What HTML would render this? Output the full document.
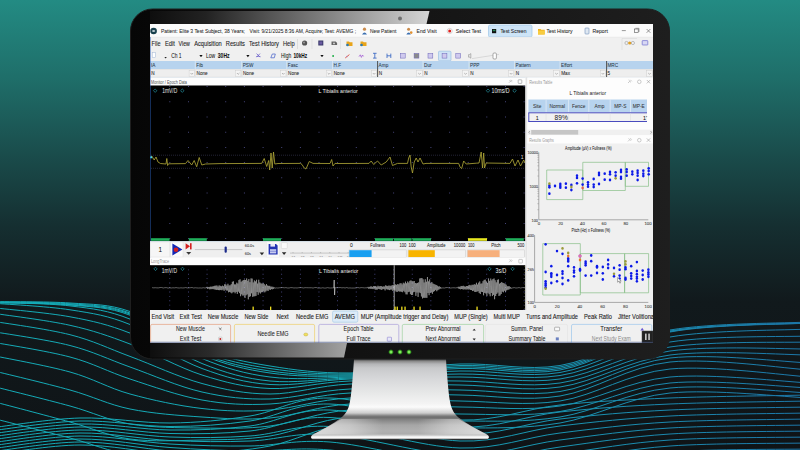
<!DOCTYPE html>
<html><head><meta charset="utf-8"><style>
html,body{margin:0;padding:0;width:800px;height:450px;overflow:hidden;background:#0f1417}
svg{display:block;font-family:"Liberation Sans", sans-serif}
</style></head><body>
<svg width="800" height="450" viewBox="0 0 800 450">
<defs>
 <linearGradient id="bg" x1="0" y1="0" x2="0" y2="1">
  <stop offset="0" stop-color="#238b83"/>
  <stop offset="0.17" stop-color="#1f6f6a"/>
  <stop offset="0.34" stop-color="#1a4d4c"/>
  <stop offset="0.5" stop-color="#152f31"/>
  <stop offset="0.67" stop-color="#11191c"/>
  <stop offset="1" stop-color="#0f1417"/>
 </linearGradient>
 <linearGradient id="wavecol" x1="0" y1="0" x2="1" y2="0">
  <stop offset="0" stop-color="#14abb7"/>
  <stop offset="0.45" stop-color="#15a6b4"/>
  <stop offset="0.75" stop-color="#1a8fb0"/>
  <stop offset="1" stop-color="#1c76a8"/>
 </linearGradient>
 <linearGradient id="bez" x1="0" y1="0" x2="1" y2="0">
  <stop offset="0" stop-color="#060606"/>
  <stop offset="0.5" stop-color="#141414"/>
  <stop offset="1" stop-color="#1e1e1e"/>
 </linearGradient>
 <linearGradient id="hlTop" gradientUnits="userSpaceOnUse" x1="150" y1="0" x2="429" y2="0">
  <stop offset="0" stop-color="#0e0e0e"/>
  <stop offset="0.2" stop-color="#222"/>
  <stop offset="0.6" stop-color="#7a7a7a"/>
  <stop offset="1" stop-color="#d4d4d4"/>
 </linearGradient>
 <linearGradient id="hlBot" gradientUnits="userSpaceOnUse" x1="150" y1="0" x2="347" y2="0">
  <stop offset="0" stop-color="#0e0e0e"/>
  <stop offset="0.3" stop-color="#2a2a2a"/>
  <stop offset="1" stop-color="#a2a2a2"/>
 </linearGradient>
 <linearGradient id="stand" gradientUnits="userSpaceOnUse" x1="0" y1="359.5" x2="0" y2="440">
  <stop offset="0.0000" stop-color="#505050"/>
  <stop offset="0.0248" stop-color="#8e8e8e"/>
  <stop offset="0.0559" stop-color="#b4b5b7"/>
  <stop offset="0.1056" stop-color="#c8c9cb"/>
  <stop offset="0.2298" stop-color="#d6d7d9"/>
  <stop offset="0.4037" stop-color="#e6e7e7"/>
  <stop offset="0.5528" stop-color="#f4f4f4"/>
  <stop offset="0.5901" stop-color="#fbfbfb"/>
  <stop offset="0.6273" stop-color="#e6e6e6"/>
  <stop offset="0.6646" stop-color="#cdcdcd"/>
  <stop offset="0.6957" stop-color="#8a8a8a"/>
  <stop offset="0.7143" stop-color="#6c6c6c"/>
  <stop offset="0.7516" stop-color="#858585"/>
  <stop offset="0.8137" stop-color="#a6a6a6"/>
  <stop offset="0.8882" stop-color="#b1b1b1"/>
  <stop offset="0.9255" stop-color="#acacac"/>
  <stop offset="0.9478" stop-color="#d8d8d8"/>
  <stop offset="0.9627" stop-color="#ffffff"/>
  <stop offset="0.9776" stop-color="#f0f0f0"/>
  <stop offset="0.9901" stop-color="#555555"/>
  <stop offset="1.0000" stop-color="#333333"/>
 </linearGradient>
 <radialGradient id="led">
  <stop offset="0" stop-color="#b8ff90"/>
  <stop offset="0.45" stop-color="#4fd030"/>
  <stop offset="1" stop-color="#1d5a18" stop-opacity="0"/>
 </radialGradient>
</defs>
<rect x="0" y="0" width="800" height="450" fill="url(#bg)"/><g fill="none" stroke="url(#wavecol)" stroke-width="1"><path d="M-10.0,301.6 C3.3,301.8 46.7,301.4 70.0,303.0 C93.3,304.6 108.0,303.8 130.0,311.5 C152.0,319.2 178.7,339.9 202.0,349.0 C225.3,358.1 245.3,362.0 270.0,366.0 C294.7,370.0 318.3,373.3 350.0,373.0 C381.7,372.7 425.0,365.2 460.0,364.0 C495.0,362.8 525.0,371.2 560.0,365.5 C595.0,359.8 628.3,337.2 670.0,330.0 C711.7,322.8 786.7,323.3 810.0,322.0"/><path d="M-10.0,302.0 C3.3,302.3 46.7,302.0 70.0,303.8 C93.3,305.6 108.0,305.1 130.0,313.0 C152.0,320.9 178.7,342.2 202.0,351.5 C225.3,360.8 245.3,364.8 270.0,368.5 C294.7,372.2 318.3,374.5 350.0,374.0 C381.7,373.5 425.0,366.7 460.0,365.5 C495.0,364.3 525.0,372.8 560.0,367.0 C595.0,361.2 628.3,338.3 670.0,331.0 C711.7,323.7 786.7,324.3 810.0,323.0"/><path d="M-10.0,302.4 C3.3,302.8 46.7,302.7 70.0,304.6 C93.3,306.5 108.0,305.9 130.0,314.0 C152.0,322.1 178.7,344.0 202.0,353.5 C225.3,363.0 245.3,367.4 270.0,371.0 C294.7,374.6 318.3,375.7 350.0,375.0 C381.7,374.3 425.0,368.1 460.0,367.0 C495.0,365.9 525.0,374.4 560.0,368.5 C595.0,362.6 628.3,339.1 670.0,331.5 C711.7,323.9 786.7,324.1 810.0,322.6"/><path d="M-10.0,302.6 C3.3,303.0 46.7,302.9 70.0,305.0 C93.3,307.1 108.0,306.9 130.0,315.2 C152.0,323.5 178.7,345.4 202.0,355.0 C225.3,364.6 245.3,369.5 270.0,373.0 C294.7,376.5 318.3,376.8 350.0,376.0 C381.7,375.2 425.0,369.5 460.0,368.5 C495.0,367.5 525.0,376.1 560.0,370.0 C595.0,363.9 628.3,339.8 670.0,332.0 C711.7,324.2 786.7,324.5 810.0,323.0"/><path d="M-10.0,302.4 C3.3,303.0 46.7,303.1 70.0,305.9 C93.3,308.7 108.0,310.3 130.0,319.1 C152.0,327.9 178.7,348.9 202.0,358.5 C225.3,368.1 245.3,373.9 270.0,377.0 C294.7,380.1 318.3,378.0 350.0,377.0 C381.7,376.0 425.0,371.8 460.0,371.0 C495.0,370.2 525.0,378.2 560.0,372.5 C595.0,366.8 628.3,344.2 670.0,337.0 C711.7,329.8 786.7,330.3 810.0,329.0"/><path d="M-10.0,303.0 C3.3,304.1 46.7,306.2 70.0,309.8 C93.3,313.4 108.0,315.6 130.0,324.5 C152.0,333.4 178.7,354.1 202.0,363.5 C225.3,372.9 245.3,378.6 270.0,381.0 C294.7,383.4 318.3,379.2 350.0,378.0 C381.7,376.8 425.0,374.4 460.0,374.0 C495.0,373.6 525.0,380.8 560.0,375.5 C595.0,370.2 628.3,348.6 670.0,342.0 C711.7,335.4 786.7,337.0 810.0,336.0"/><path d="M-10.0,307.4 C3.3,309.0 46.7,312.5 70.0,316.8 C93.3,321.1 108.0,324.5 130.0,333.1 C152.0,341.7 178.7,359.9 202.0,368.5 C225.3,377.1 245.3,382.8 270.0,384.5 C294.7,386.2 318.3,380.2 350.0,379.0 C381.7,377.8 425.0,377.0 460.0,377.0 C495.0,377.0 525.0,384.0 560.0,379.0 C595.0,374.0 628.3,353.2 670.0,347.0 C711.7,340.8 786.7,342.8 810.0,342.0"/><path d="M-10.0,312.8 C3.3,314.9 46.7,320.1 70.0,325.3 C93.3,330.5 108.0,335.7 130.0,344.0 C152.0,352.3 178.7,367.6 202.0,375.0 C225.3,382.4 245.3,387.5 270.0,388.5 C294.7,389.5 318.3,382.2 350.0,381.0 C381.7,379.8 425.0,380.7 460.0,381.0 C495.0,381.3 525.0,388.0 560.0,383.0 C595.0,378.0 628.3,356.7 670.0,351.0 C711.7,345.3 786.7,349.3 810.0,349.0"/><path d="M-10.0,320.8 C3.3,323.1 46.7,328.8 70.0,334.7 C93.3,340.6 108.0,348.3 130.0,356.4 C152.0,364.5 178.7,377.2 202.0,383.5 C225.3,389.8 245.3,393.9 270.0,394.0 C294.7,394.1 318.3,385.5 350.0,384.0 C381.7,382.5 425.0,384.5 460.0,385.0 C495.0,385.5 525.0,392.0 560.0,387.0 C595.0,382.0 628.3,360.3 670.0,355.0 C711.7,349.7 786.7,355.0 810.0,355.0"/><path d="M-10.0,331.1 C3.3,333.5 46.7,339.5 70.0,345.5 C93.3,351.5 108.0,359.2 130.0,367.0 C152.0,374.8 178.7,386.7 202.0,392.0 C225.3,397.3 245.3,399.5 270.0,399.0 C294.7,398.5 318.3,390.5 350.0,389.0 C381.7,387.5 425.0,389.6 460.0,390.0 C495.0,390.4 525.0,396.8 560.0,391.5 C595.0,386.2 628.3,362.8 670.0,358.0 C711.7,353.2 786.7,362.2 810.0,363.0"/><path d="M-10.0,341.7 C3.3,344.2 46.7,350.8 70.0,357.0 C93.3,363.2 108.0,371.8 130.0,379.0 C152.0,386.2 178.7,395.8 202.0,400.0 C225.3,404.2 245.3,405.2 270.0,404.0 C294.7,402.8 318.3,394.5 350.0,393.0 C381.7,391.5 425.0,394.5 460.0,395.0 C495.0,395.5 525.0,401.5 560.0,396.0 C595.0,390.5 628.3,366.3 670.0,362.0 C711.7,357.7 786.7,368.7 810.0,370.0"/><path d="M-10.0,355.0 C3.3,357.8 46.7,365.5 70.0,372.0 C93.3,378.5 108.0,387.9 130.0,394.0 C152.0,400.1 178.7,405.8 202.0,408.5 C225.3,411.2 245.3,411.8 270.0,410.0 C294.7,408.2 318.3,399.5 350.0,398.0 C381.7,396.5 425.0,400.5 460.0,401.0 C495.0,401.5 525.0,406.3 560.0,401.0 C595.0,395.7 628.3,373.0 670.0,369.0 C711.7,365.0 786.7,375.7 810.0,377.0"/><path d="M-10.0,370.0 C3.3,373.3 46.7,383.5 70.0,390.0 C93.3,396.5 108.0,404.5 130.0,409.0 C152.0,413.5 178.7,415.5 202.0,417.0 C225.3,418.5 245.3,420.2 270.0,418.0 C294.7,415.8 318.3,405.8 350.0,404.0 C381.7,402.2 425.0,406.7 460.0,407.0 C495.0,407.3 525.0,411.0 560.0,406.0 C595.0,401.0 628.3,380.8 670.0,377.0 C711.7,373.2 786.7,382.0 810.0,383.0"/><path d="M-10.0,385.6 C3.3,389.0 46.7,399.6 70.0,406.0 C93.3,412.4 108.0,420.3 130.0,424.0 C152.0,427.7 178.7,427.7 202.0,428.0 C225.3,428.3 245.3,429.0 270.0,426.0 C294.7,423.0 318.3,412.0 350.0,410.0 C381.7,408.0 425.0,413.8 460.0,414.0 C495.0,414.2 525.0,416.7 560.0,411.5 C595.0,406.3 628.3,386.9 670.0,383.0 C711.7,379.1 786.7,387.2 810.0,388.0"/><path d="M-10.0,400.7 C3.3,404.2 46.7,415.6 70.0,422.0 C93.3,428.4 108.0,436.0 130.0,439.0 C152.0,442.0 178.7,440.5 202.0,440.0 C225.3,439.5 245.3,439.8 270.0,436.0 C294.7,432.2 318.3,419.5 350.0,417.0 C381.7,414.5 425.0,421.0 460.0,421.0 C495.0,421.0 525.0,422.5 560.0,417.0 C595.0,411.5 628.3,392.0 670.0,388.0 C711.7,384.0 786.7,392.2 810.0,393.0"/><path d="M-10.0,417.6 C3.3,421.0 46.7,431.9 70.0,438.0 C93.3,444.1 108.0,451.5 130.0,454.0 C152.0,456.5 178.7,454.3 202.0,453.0 C225.3,451.7 245.3,450.8 270.0,446.0 C294.7,441.2 318.3,427.0 350.0,424.0 C381.7,421.0 425.0,428.2 460.0,428.0 C495.0,427.8 525.0,428.8 560.0,423.0 C595.0,417.2 628.3,397.2 670.0,393.0 C711.7,388.8 786.7,397.2 810.0,398.0"/><path d="M-10.0,428.0 C5.0,426.3 50.0,418.8 80.0,418.0 C110.0,417.2 141.7,423.3 170.0,423.0 C198.3,422.7 223.3,420.2 250.0,416.0 C276.7,411.8 295.0,397.3 330.0,398.0 C365.0,398.7 421.7,418.8 460.0,420.0 C498.3,421.2 525.0,408.7 560.0,405.0 C595.0,401.3 628.3,399.7 670.0,398.0 C711.7,396.3 786.7,395.5 810.0,395.0"/><path d="M-10.0,431.0 C5.0,429.3 50.0,421.8 80.0,421.0 C110.0,420.2 141.7,426.5 170.0,426.5 C198.3,426.5 223.3,424.8 250.0,421.0 C276.7,417.2 295.0,403.0 330.0,404.0 C365.0,405.0 421.7,425.7 460.0,427.0 C498.3,428.3 525.0,415.8 560.0,412.0 C595.0,408.2 628.3,405.8 670.0,404.0 C711.7,402.2 786.7,401.5 810.0,401.0"/><path d="M-10.0,434.0 C5.0,432.3 50.0,424.7 80.0,424.0 C110.0,423.3 141.7,429.7 170.0,430.0 C198.3,430.3 223.3,429.3 250.0,426.0 C276.7,422.7 295.0,408.7 330.0,410.0 C365.0,411.3 421.7,432.5 460.0,434.0 C498.3,435.5 525.0,423.0 560.0,419.0 C595.0,415.0 628.3,412.0 670.0,410.0 C711.7,408.0 786.7,407.5 810.0,407.0"/><path d="M-10.0,437.0 C5.0,435.3 50.0,427.6 80.0,427.0 C110.0,426.4 141.7,432.8 170.0,433.5 C198.3,434.2 223.3,433.7 250.0,431.0 C276.7,428.3 295.0,415.8 330.0,417.5 C365.0,419.2 421.7,439.6 460.0,441.0 C498.3,442.4 525.0,430.2 560.0,426.0 C595.0,421.8 628.3,418.2 670.0,416.0 C711.7,413.8 786.7,413.5 810.0,413.0"/><path d="M-10.0,440.0 C5.0,438.3 50.0,430.5 80.0,430.0 C110.0,429.5 141.7,436.0 170.0,437.0 C198.3,438.0 223.3,437.8 250.0,436.0 C276.7,434.2 295.0,424.5 330.0,426.5 C365.0,428.5 421.7,446.9 460.0,448.0 C498.3,449.1 525.0,437.3 560.0,433.0 C595.0,428.7 628.3,424.3 670.0,422.0 C711.7,419.7 786.7,419.5 810.0,419.0"/><path d="M-10.0,443.0 C5.0,441.3 50.0,433.4 80.0,433.0 C110.0,432.6 141.7,439.2 170.0,440.5 C198.3,441.8 223.3,442.0 250.0,441.0 C276.7,440.0 295.0,432.1 330.0,434.4 C365.0,436.7 421.7,454.1 460.0,455.0 C498.3,455.9 525.0,444.5 560.0,440.0 C595.0,435.5 628.3,430.5 670.0,428.0 C711.7,425.5 786.7,425.5 810.0,425.0"/><path d="M-10.0,446.0 C5.0,444.3 50.0,436.3 80.0,436.0 C110.0,435.7 141.7,442.3 170.0,444.0 C198.3,445.7 223.3,446.3 250.0,446.0 C276.7,445.7 295.0,439.3 330.0,442.0 C365.0,444.7 421.7,461.2 460.0,462.0 C498.3,462.8 525.0,451.7 560.0,447.0 C595.0,442.3 628.3,436.7 670.0,434.0 C711.7,431.3 786.7,431.5 810.0,431.0"/><path d="M-10.0,449.0 C5.0,447.3 50.0,439.2 80.0,439.0 C110.0,438.8 141.7,445.5 170.0,447.5 C198.3,449.5 223.3,450.6 250.0,451.0 C276.7,451.4 295.0,447.0 330.0,450.0 C365.0,453.0 421.7,468.3 460.0,469.0 C498.3,469.7 525.0,458.8 560.0,454.0 C595.0,449.2 628.3,442.8 670.0,440.0 C711.7,437.2 786.7,437.5 810.0,437.0"/><path d="M-10.0,452.0 C5.0,450.3 50.0,442.2 80.0,442.0 C110.0,441.8 141.7,448.7 170.0,451.0 C198.3,453.3 223.3,454.8 250.0,456.0 C276.7,457.2 295.0,454.7 330.0,458.0 C365.0,461.3 421.7,475.5 460.0,476.0 C498.3,476.5 525.0,466.0 560.0,461.0 C595.0,456.0 628.3,449.0 670.0,446.0 C711.7,443.0 786.7,443.5 810.0,443.0"/><path d="M-10.0,455.0 C5.0,453.3 50.0,445.1 80.0,445.0 C110.0,444.9 141.7,451.8 170.0,454.5 C198.3,457.2 223.3,459.1 250.0,461.0 C276.7,462.9 295.0,462.3 330.0,466.0 C365.0,469.7 421.7,482.7 460.0,483.0 C498.3,483.3 525.0,473.2 560.0,468.0 C595.0,462.8 628.3,455.2 670.0,452.0 C711.7,448.8 786.7,449.5 810.0,449.0"/></g><rect x="130.5" y="9" width="539" height="350" rx="22" fill="url(#bez)" stroke="#1f1f1f" stroke-width="1"/><polygon points="150,11 429.5,11 426.5,24 150,24" fill="url(#hlTop)"/><circle cx="400" cy="18.5" r="2" fill="#6e6e6e"/><polygon points="150,343 347,343 344,357.5 150,357.5" fill="url(#hlBot)"/><circle cx="391" cy="352" r="3" fill="url(#led)"/><circle cx="400" cy="352" r="3" fill="url(#led)"/><circle cx="409" cy="352" r="3" fill="url(#led)"/><path d="M354,359.5 C352.5,380 351.5,395 349.5,404 C348,410 346,413.5 341.5,417.5 C333,424 322,430 313,434.5 C310,436.2 310.6,439.4 314,439.6 L486,439.6 C489.4,439.4 490,436.2 487,434.5 C478,430 467,424 458.5,417.5 C454,413.5 452,410 450.5,404 C448.5,395 447.5,380 446,359.5 Z" fill="url(#stand)"/><linearGradient id="footsh" gradientUnits="userSpaceOnUse" x1="311" y1="0" x2="489" y2="0"><stop offset="0" stop-color="#fff" stop-opacity="0.55"/><stop offset="0.22" stop-color="#fff" stop-opacity="0.35"/><stop offset="0.4" stop-color="#fff" stop-opacity="0"/><stop offset="0.6" stop-color="#fff" stop-opacity="0"/><stop offset="0.78" stop-color="#fff" stop-opacity="0.35"/><stop offset="1" stop-color="#fff" stop-opacity="0.55"/></linearGradient><path d="M341.5,419 C333,424 322,430 313,434.5 L487,434.5 C478,430 467,424 458.5,419 Z" fill="url(#footsh)"/><clipPath id="scr"><rect x="150" y="24" width="503" height="318.7"/></clipPath><g clip-path="url(#scr)"><rect x="150" y="24" width="503" height="319" fill="#f0f0f0"/><rect x="150" y="24" width="503" height="13" fill="#fbfbfb"/><circle cx="153.6" cy="31" r="3.3" fill="#173f4c"/><path d="M152.4,30.2 h2 l0.9,0.8 -0.9,0.8 h-2z" fill="#e8f0f4"/><text x="161" y="33.1" font-size="5.8" fill="#222" text-anchor="start" font-weight="normal" textLength="84" lengthAdjust="spacingAndGlyphs" stroke="#222" stroke-width="0.05">Patient: Elite 3 Test Subject, 38 Years;</text><text x="249.6" y="33.1" font-size="5.8" fill="#222" text-anchor="start" font-weight="normal" textLength="106.5" lengthAdjust="spacingAndGlyphs" stroke="#222" stroke-width="0.05">Visit: 9/21/2025 8:36 AM, Acquire; Test: AVEMG ;</text><circle cx="364.5" cy="29.2" r="1.6" fill="#c98a4a"/><path d="M362,34.5 q2.5,-4 5,0z" fill="#3a6fb0"/><text x="370" y="33.1" font-size="5.8" fill="#222" text-anchor="start" font-weight="normal" textLength="26.3" lengthAdjust="spacingAndGlyphs" stroke="#222" stroke-width="0.05">New Patient</text><circle cx="408.6" cy="29.2" r="1.5" fill="#c98a4a"/><path d="M406.3,34.5 q2.3,-4 4.6,0z" fill="#3a6fb0"/><circle cx="411.2" cy="32.6" r="1.3" fill="#e09030"/><text x="416.5" y="33.1" font-size="5.8" fill="#222" text-anchor="start" font-weight="normal" textLength="20.1" lengthAdjust="spacingAndGlyphs" stroke="#222" stroke-width="0.05">End Visit</text><circle cx="449.7" cy="31" r="2.6" fill="#fff" stroke="#bbb" stroke-width="0.6"/><circle cx="449.7" cy="31" r="1.5" fill="#e0201c"/><text x="455.7" y="33.1" font-size="5.8" fill="#222" text-anchor="start" font-weight="normal" textLength="25.3" lengthAdjust="spacingAndGlyphs" stroke="#222" stroke-width="0.05">Select Test</text><rect x="488.5" y="25" width="43.5" height="12" rx="1.5" fill="#cde4f7" stroke="#9cc5e8" stroke-width="0.7"/><rect x="492" y="29" width="4.2" height="4.2" fill="#111"/><rect x="492.8" y="29.8" width="2.6" height="1.4" fill="#2a8a5a"/><text x="500.4" y="33.1" font-size="5.8" fill="#222" text-anchor="start" font-weight="normal" textLength="26.2" lengthAdjust="spacingAndGlyphs" stroke="#222" stroke-width="0.05">Test Screen</text><path d="M538,29 h2.5 l0.8,0.8 h3.4 v4.6 h-6.7z" fill="#f2b21c"/><rect x="538" y="30.6" width="6.7" height="3.8" fill="#f8cc40"/><text x="546.4" y="33.1" font-size="5.8" fill="#222" text-anchor="start" font-weight="normal" textLength="26.1" lengthAdjust="spacingAndGlyphs" stroke="#222" stroke-width="0.05">Test History</text><rect x="585" y="28" width="4" height="6" rx="0.8" fill="#dfe8f2" stroke="#6f8fb8" stroke-width="0.6"/><text x="592.5" y="33.1" font-size="5.8" fill="#222" text-anchor="start" font-weight="normal" textLength="15.3" lengthAdjust="spacingAndGlyphs" stroke="#222" stroke-width="0.05">Report</text><line x1="621.8" y1="30.6" x2="625.8" y2="30.6" stroke="#555" stroke-width="0.6"/><rect x="634.6" y="29" width="3.6" height="3.6" fill="none" stroke="#555" stroke-width="0.6"/><path d="M635.4,28.3 h3.6 v3.6" fill="none" stroke="#555" stroke-width="0.5"/><path d="M646.6,29 l3.8,3.8 M650.4,29 l-3.8,3.8" stroke="#555" stroke-width="0.6"/><rect x="150" y="37" width="503" height="13" fill="#f0f0f0"/><line x1="150" y1="37.2" x2="653" y2="37.2" stroke="#e2e2e2" stroke-width="0.5"/><text x="151.5" y="46.3" font-size="7.6" fill="#1a1a1a" text-anchor="start" font-weight="normal" textLength="9.0" lengthAdjust="spacingAndGlyphs" stroke="#1a1a1a" stroke-width="0.1">File</text><text x="164.9" y="46.3" font-size="7.6" fill="#1a1a1a" text-anchor="start" font-weight="normal" textLength="10.0" lengthAdjust="spacingAndGlyphs" stroke="#1a1a1a" stroke-width="0.1">Edit</text><text x="178.6" y="46.3" font-size="7.6" fill="#1a1a1a" text-anchor="start" font-weight="normal" textLength="11.3" lengthAdjust="spacingAndGlyphs" stroke="#1a1a1a" stroke-width="0.1">View</text><text x="194.2" y="46.3" font-size="7.6" fill="#1a1a1a" text-anchor="start" font-weight="normal" textLength="27.6" lengthAdjust="spacingAndGlyphs" stroke="#1a1a1a" stroke-width="0.1">Acquisition</text><text x="225.8" y="46.3" font-size="7.6" fill="#1a1a1a" text-anchor="start" font-weight="normal" textLength="19.1" lengthAdjust="spacingAndGlyphs" stroke="#1a1a1a" stroke-width="0.1">Results</text><text x="249" y="46.3" font-size="7.6" fill="#1a1a1a" text-anchor="start" font-weight="normal" textLength="30" lengthAdjust="spacingAndGlyphs" stroke="#1a1a1a" stroke-width="0.1">Test History</text><text x="283" y="46.3" font-size="7.6" fill="#1a1a1a" text-anchor="start" font-weight="normal" textLength="11.7" lengthAdjust="spacingAndGlyphs" stroke="#1a1a1a" stroke-width="0.1">Help</text><line x1="297.5" y1="39" x2="297.5" y2="49" stroke="#d0d0d0" stroke-width="0.6"/><circle cx="304.6" cy="43" r="2.6" fill="#555"/><circle cx="304" cy="42.4" r="1" fill="#999"/><line x1="312" y1="39" x2="312" y2="49" stroke="#d8d8d8" stroke-width="0.6"/><rect x="318.3" y="40.5" width="5" height="5" fill="#3a3a6a"/><rect x="319.3" y="41.5" width="3" height="3" fill="#6a5aa0"/><path d="M331.5,41.6 h4.2 l1.4,1.4 v2 h-5.6z" fill="#666"/><circle cx="334" cy="43.4" r="0.9" fill="#ddd"/><line x1="340.5" y1="39" x2="340.5" y2="49" stroke="#d8d8d8" stroke-width="0.6"/><path d="M346.5,41.5 h2.5 l0.7,0.8 h2.8 v3.8 h-6z" fill="#e8a41a"/><circle cx="347.5" cy="45" r="1.3" fill="#2a7ab8"/><path d="M360.5,41.5 h2.5 l0.7,0.8 h2.8 v3.8 h-6z" fill="#e8a41a"/><circle cx="361.5" cy="45" r="1.3" fill="#2a7ab8"/><line x1="622" y1="38.5" x2="622" y2="50" stroke="#d4d4d4" stroke-width="0.5"/><line x1="622" y1="38.5" x2="637" y2="38.5" stroke="#d4d4d4" stroke-width="0.5"/><circle cx="626.5" cy="43" r="1.6" fill="none" stroke="#888" stroke-width="0.5"/><circle cx="629.7" cy="43" r="1.6" fill="#e2a020"/><circle cx="632.9" cy="43" r="1.6" fill="none" stroke="#888" stroke-width="0.5"/><rect x="642.2" y="40.6" width="5.6" height="4.4" rx="0.5" fill="#d8d8f4" stroke="#5b5bc8" stroke-width="0.6"/><rect x="150" y="50" width="503" height="11" fill="#f0f0f0"/><rect x="152.2" y="52.5" width="3.4" height="5" fill="#fff" stroke="#9db4d4" stroke-width="0.5"/><path d="M164.4,57.1 h2.4 l-1.2,1.3z" fill="#222"/><text x="171.2" y="58.3" font-size="6.4" fill="#111" text-anchor="start" font-weight="normal" textLength="10.4" lengthAdjust="spacingAndGlyphs" stroke="#111" stroke-width="0.05">Ch 1</text><path d="M199.4,55.1 h3.2 l-1.6,2.2z" fill="#111"/><text x="206" y="58.3" font-size="6.4" fill="#111" text-anchor="start" font-weight="normal" textLength="9.2" lengthAdjust="spacingAndGlyphs" stroke="#111" stroke-width="0.05">Low</text><text x="217.8" y="58.3" font-size="6.4" fill="#111" text-anchor="start" font-weight="bold" textLength="11.8" lengthAdjust="spacingAndGlyphs" stroke="#111" stroke-width="0.05">30Hz</text><path d="M246.3,55.1 h3.2 l-1.6,2.2z" fill="#111"/><path d="M256.6,53.6 l3.4,3.6 M260,53.6 l-3.4,3.6" stroke="#5a4ec4" stroke-width="0.7"/><path d="M256,56.5 h4.6" stroke="#5a4ec4" stroke-width="0.5"/><path d="M270.8,57.8 l1.5,-3.8 h3 l-1,3.8z" fill="none" stroke="#3f5cc8" stroke-width="0.7"/><text x="281" y="58.3" font-size="6.4" fill="#111" text-anchor="start" font-weight="normal" textLength="10.2" lengthAdjust="spacingAndGlyphs" stroke="#111" stroke-width="0.05">High</text><text x="293.4" y="58.3" font-size="6.4" fill="#111" text-anchor="start" font-weight="bold" textLength="13.8" lengthAdjust="spacingAndGlyphs" stroke="#111" stroke-width="0.05">10kHz</text><path d="M320.4,55.1 h3.2 l-1.6,2.2z" fill="#111"/><circle cx="333.1" cy="55.9" r="1" fill="#22b04a"/><path d="M345.2,58 l4.2,-3.4" stroke="#d83a2a" stroke-width="0.8"/><path d="M346,56.2 l1.5,0.6" stroke="#8a6ad0" stroke-width="0.5"/><path d="M359,56.6 l1.3,-1.8 1.1,2.6 1.1,-2.4 1,1.4" fill="none" stroke="#9a4ad0" stroke-width="0.7"/><path d="M373,53.3 h3.6 M374.8,53.3 v4.8 M373,58.1 h3.6" stroke="#2f5fc0" stroke-width="0.8"/><path d="M387,53.6 v4.4 M390.8,53.6 v4.4 M387,55.8 h3.8" stroke="#2f5fc0" stroke-width="0.8"/><rect x="400.40000000000003" y="53.5" width="4.8" height="4.6" fill="#cfc9ee" stroke="#6a64b8" stroke-width="0.5"/><rect x="414.1" y="53.5" width="4.8" height="4.6" fill="#8a8a8a" stroke="#6a64b8" stroke-width="0.5"/><rect x="428.0" y="53.5" width="4.8" height="4.6" fill="#cfc9ee" stroke="#6a64b8" stroke-width="0.5"/><rect x="438.5" y="51.2" width="12.5" height="9.6" rx="1" fill="#cfe3f6" stroke="#8fb8e0" stroke-width="0.6"/><rect x="442.1" y="53.5" width="4.8" height="4.6" fill="#cfc9ee" stroke="#6a64b8" stroke-width="0.5"/><rect x="455.8" y="53.5" width="4.8" height="4.6" fill="#cfc9ee" stroke="#6a64b8" stroke-width="0.5"/><path d="M468.6,54.6 h1 l1.2,-1 v4.6 l-1.2,-1 h-1z" fill="none" stroke="#777" stroke-width="0.5"/><path d="M472,58.6 l27,-4.2" stroke="#c8c8c8" stroke-width="0.6"/><rect x="493" y="53" width="3.4" height="6" rx="1" fill="#fff" stroke="#777" stroke-width="0.6"/><rect x="150" y="61" width="503" height="8.2" fill="#b7d3ee"/><rect x="150" y="69.2" width="503" height="8.3" fill="#ececec"/><line x1="150" y1="77.3" x2="653" y2="77.3" stroke="#a9c1da" stroke-width="0.7"/><text x="151" y="67.2" font-size="4.7" fill="#2a3a4a" text-anchor="start" font-weight="normal" stroke="#2a3a4a" stroke-width="0.05">IA</text><rect x="150.5" y="69.6" width="44.30000000000001" height="7.4" fill="#eeeeee" stroke="#dcdcdc" stroke-width="0.4"/><rect x="189.10000000000002" y="70.2" width="5.4" height="6.4" fill="#f4f4f4" stroke="#c8c8c8" stroke-width="0.4"/><path d="M190.5,73 l1.3,1.3 1.3,-1.3" fill="none" stroke="#555" stroke-width="0.4"/><text x="151.2" y="75.2" font-size="4.7" fill="#222" text-anchor="start" font-weight="normal" stroke="#222" stroke-width="0.05">N</text><line x1="195.3" y1="61" x2="195.3" y2="69.2" stroke="#e8f0f8" stroke-width="0.6"/><text x="196.3" y="67.2" font-size="4.7" fill="#2a3a4a" text-anchor="start" font-weight="normal" stroke="#2a3a4a" stroke-width="0.05">Fib</text><rect x="195.8" y="69.6" width="45.39999999999998" height="7.4" fill="#eeeeee" stroke="#dcdcdc" stroke-width="0.4"/><rect x="235.5" y="70.2" width="5.4" height="6.4" fill="#f4f4f4" stroke="#c8c8c8" stroke-width="0.4"/><path d="M236.89999999999998,73 l1.3,1.3 1.3,-1.3" fill="none" stroke="#555" stroke-width="0.4"/><text x="196.5" y="75.2" font-size="4.7" fill="#222" text-anchor="start" font-weight="normal" stroke="#222" stroke-width="0.05">None</text><line x1="241.7" y1="61" x2="241.7" y2="69.2" stroke="#e8f0f8" stroke-width="0.6"/><text x="242.7" y="67.2" font-size="4.7" fill="#2a3a4a" text-anchor="start" font-weight="normal" stroke="#2a3a4a" stroke-width="0.05">PSW</text><rect x="242.2" y="69.6" width="44.10000000000002" height="7.4" fill="#eeeeee" stroke="#dcdcdc" stroke-width="0.4"/><rect x="280.6" y="70.2" width="5.4" height="6.4" fill="#f4f4f4" stroke="#c8c8c8" stroke-width="0.4"/><path d="M282.0,73 l1.3,1.3 1.3,-1.3" fill="none" stroke="#555" stroke-width="0.4"/><text x="242.89999999999998" y="75.2" font-size="4.7" fill="#222" text-anchor="start" font-weight="normal" stroke="#222" stroke-width="0.05">None</text><line x1="286.8" y1="61" x2="286.8" y2="69.2" stroke="#e8f0f8" stroke-width="0.6"/><text x="287.8" y="67.2" font-size="4.7" fill="#2a3a4a" text-anchor="start" font-weight="normal" stroke="#2a3a4a" stroke-width="0.05">Fasc</text><rect x="287.3" y="69.6" width="44.69999999999999" height="7.4" fill="#eeeeee" stroke="#dcdcdc" stroke-width="0.4"/><rect x="326.3" y="70.2" width="5.4" height="6.4" fill="#f4f4f4" stroke="#c8c8c8" stroke-width="0.4"/><path d="M327.7,73 l1.3,1.3 1.3,-1.3" fill="none" stroke="#555" stroke-width="0.4"/><text x="288.0" y="75.2" font-size="4.7" fill="#222" text-anchor="start" font-weight="normal" stroke="#222" stroke-width="0.05">None</text><line x1="332.5" y1="61" x2="332.5" y2="69.2" stroke="#e8f0f8" stroke-width="0.6"/><text x="333.5" y="67.2" font-size="4.7" fill="#2a3a4a" text-anchor="start" font-weight="normal" stroke="#2a3a4a" stroke-width="0.05">H.F</text><rect x="333.0" y="69.6" width="44.10000000000002" height="7.4" fill="#eeeeee" stroke="#dcdcdc" stroke-width="0.4"/><rect x="371.40000000000003" y="70.2" width="5.4" height="6.4" fill="#f4f4f4" stroke="#c8c8c8" stroke-width="0.4"/><path d="M372.8,73 l1.3,1.3 1.3,-1.3" fill="none" stroke="#555" stroke-width="0.4"/><text x="333.7" y="75.2" font-size="4.7" fill="#222" text-anchor="start" font-weight="normal" stroke="#222" stroke-width="0.05">None</text><line x1="377.6" y1="61" x2="377.6" y2="69.2" stroke="#e8f0f8" stroke-width="0.6"/><text x="378.6" y="67.2" font-size="4.7" fill="#2a3a4a" text-anchor="start" font-weight="normal" stroke="#2a3a4a" stroke-width="0.05">Amp</text><rect x="378.1" y="69.6" width="44.39999999999998" height="7.4" fill="#eeeeee" stroke="#dcdcdc" stroke-width="0.4"/><rect x="416.8" y="70.2" width="5.4" height="6.4" fill="#f4f4f4" stroke="#c8c8c8" stroke-width="0.4"/><path d="M418.2,73 l1.3,1.3 1.3,-1.3" fill="none" stroke="#555" stroke-width="0.4"/><text x="378.8" y="75.2" font-size="4.7" fill="#222" text-anchor="start" font-weight="normal" stroke="#222" stroke-width="0.05">N</text><line x1="423" y1="61" x2="423" y2="69.2" stroke="#e8f0f8" stroke-width="0.6"/><text x="424" y="67.2" font-size="4.7" fill="#2a3a4a" text-anchor="start" font-weight="normal" stroke="#2a3a4a" stroke-width="0.05">Dur</text><rect x="423.5" y="69.6" width="45" height="7.4" fill="#eeeeee" stroke="#dcdcdc" stroke-width="0.4"/><rect x="462.8" y="70.2" width="5.4" height="6.4" fill="#f4f4f4" stroke="#c8c8c8" stroke-width="0.4"/><path d="M464.2,73 l1.3,1.3 1.3,-1.3" fill="none" stroke="#555" stroke-width="0.4"/><text x="424.2" y="75.2" font-size="4.7" fill="#222" text-anchor="start" font-weight="normal" stroke="#222" stroke-width="0.05">N</text><line x1="469" y1="61" x2="469" y2="69.2" stroke="#e8f0f8" stroke-width="0.6"/><text x="470" y="67.2" font-size="4.7" fill="#2a3a4a" text-anchor="start" font-weight="normal" stroke="#2a3a4a" stroke-width="0.05">PPP</text><rect x="469.5" y="69.6" width="44.60000000000002" height="7.4" fill="#eeeeee" stroke="#dcdcdc" stroke-width="0.4"/><rect x="508.40000000000003" y="70.2" width="5.4" height="6.4" fill="#f4f4f4" stroke="#c8c8c8" stroke-width="0.4"/><path d="M509.8,73 l1.3,1.3 1.3,-1.3" fill="none" stroke="#555" stroke-width="0.4"/><text x="470.2" y="75.2" font-size="4.7" fill="#222" text-anchor="start" font-weight="normal" stroke="#222" stroke-width="0.05">N</text><line x1="514.6" y1="61" x2="514.6" y2="69.2" stroke="#e8f0f8" stroke-width="0.6"/><text x="515.6" y="67.2" font-size="4.7" fill="#2a3a4a" text-anchor="start" font-weight="normal" stroke="#2a3a4a" stroke-width="0.05">Pattern</text><rect x="515.1" y="69.6" width="44.39999999999998" height="7.4" fill="#eeeeee" stroke="#dcdcdc" stroke-width="0.4"/><rect x="553.8" y="70.2" width="5.4" height="6.4" fill="#f4f4f4" stroke="#c8c8c8" stroke-width="0.4"/><path d="M555.2,73 l1.3,1.3 1.3,-1.3" fill="none" stroke="#555" stroke-width="0.4"/><text x="515.8000000000001" y="75.2" font-size="4.7" fill="#222" text-anchor="start" font-weight="normal" stroke="#222" stroke-width="0.05">N</text><line x1="560" y1="61" x2="560" y2="69.2" stroke="#e8f0f8" stroke-width="0.6"/><text x="561" y="67.2" font-size="4.7" fill="#2a3a4a" text-anchor="start" font-weight="normal" stroke="#2a3a4a" stroke-width="0.05">Effort</text><rect x="560.5" y="69.6" width="45.39999999999998" height="7.4" fill="#eeeeee" stroke="#dcdcdc" stroke-width="0.4"/><rect x="600.1999999999999" y="70.2" width="5.4" height="6.4" fill="#f4f4f4" stroke="#c8c8c8" stroke-width="0.4"/><path d="M601.6,73 l1.3,1.3 1.3,-1.3" fill="none" stroke="#555" stroke-width="0.4"/><text x="561.2" y="75.2" font-size="4.7" fill="#222" text-anchor="start" font-weight="normal" stroke="#222" stroke-width="0.05">Max</text><line x1="606.4" y1="61" x2="606.4" y2="69.2" stroke="#e8f0f8" stroke-width="0.6"/><text x="607.4" y="67.2" font-size="4.7" fill="#2a3a4a" text-anchor="start" font-weight="normal" stroke="#2a3a4a" stroke-width="0.05">MRC</text><rect x="606.9" y="69.6" width="45.60000000000002" height="7.4" fill="#eeeeee" stroke="#dcdcdc" stroke-width="0.4"/><rect x="646.8" y="70.2" width="5.4" height="6.4" fill="#f4f4f4" stroke="#c8c8c8" stroke-width="0.4"/><path d="M648.2,73 l1.3,1.3 1.3,-1.3" fill="none" stroke="#555" stroke-width="0.4"/><text x="607.6" y="75.2" font-size="4.7" fill="#222" text-anchor="start" font-weight="normal" stroke="#222" stroke-width="0.05">5</text><path d="M606.6,61 V77 M377.6,61 V77" stroke="#2a2a2a" stroke-width="0.8"/><rect x="150" y="77.5" width="376" height="8" fill="#fdfdfd"/><text x="151" y="83.6" font-size="4.6" fill="#555" text-anchor="start" font-weight="normal" textLength="36" lengthAdjust="spacingAndGlyphs">Monitor / Epoch Data</text><path d="M509.5,80 l2.2,2.2 M510.6,81.1 l-1.6,1.6 M511,79.8 l1.4,1.4" stroke="#888" stroke-width="0.5"/><rect x="518.2" y="79.8" width="3.6" height="3.6" rx="0.5" fill="none" stroke="#777" stroke-width="0.5"/><rect x="150" y="85.5" width="375.5" height="155.8" fill="#000"/><path d="M169.3,86.1h1v1h-1zM188.0,86.1h1v1h-1zM206.6,86.1h1v1h-1zM225.2,86.1h1v1h-1zM243.9,86.1h1v1h-1zM262.6,86.1h1v1h-1zM281.2,86.1h1v1h-1zM299.9,86.1h1v1h-1zM318.5,86.1h1v1h-1zM337.1,86.1h1v1h-1zM355.8,86.1h1v1h-1zM374.4,86.1h1v1h-1zM393.1,86.1h1v1h-1zM411.8,86.1h1v1h-1zM430.4,86.1h1v1h-1zM449.1,86.1h1v1h-1zM467.7,86.1h1v1h-1zM486.3,86.1h1v1h-1zM505.0,86.1h1v1h-1zM523.6,86.1h1v1h-1zM169.3,101.3h1v1h-1zM188.0,101.3h1v1h-1zM206.6,101.3h1v1h-1zM225.2,101.3h1v1h-1zM243.9,101.3h1v1h-1zM262.6,101.3h1v1h-1zM281.2,101.3h1v1h-1zM299.9,101.3h1v1h-1zM318.5,101.3h1v1h-1zM337.1,101.3h1v1h-1zM355.8,101.3h1v1h-1zM374.4,101.3h1v1h-1zM393.1,101.3h1v1h-1zM411.8,101.3h1v1h-1zM430.4,101.3h1v1h-1zM449.1,101.3h1v1h-1zM467.7,101.3h1v1h-1zM486.3,101.3h1v1h-1zM505.0,101.3h1v1h-1zM523.6,101.3h1v1h-1zM169.3,116.5h1v1h-1zM188.0,116.5h1v1h-1zM206.6,116.5h1v1h-1zM225.2,116.5h1v1h-1zM243.9,116.5h1v1h-1zM262.6,116.5h1v1h-1zM281.2,116.5h1v1h-1zM299.9,116.5h1v1h-1zM318.5,116.5h1v1h-1zM337.1,116.5h1v1h-1zM355.8,116.5h1v1h-1zM374.4,116.5h1v1h-1zM393.1,116.5h1v1h-1zM411.8,116.5h1v1h-1zM430.4,116.5h1v1h-1zM449.1,116.5h1v1h-1zM467.7,116.5h1v1h-1zM486.3,116.5h1v1h-1zM505.0,116.5h1v1h-1zM523.6,116.5h1v1h-1zM169.3,131.7h1v1h-1zM188.0,131.7h1v1h-1zM206.6,131.7h1v1h-1zM225.2,131.7h1v1h-1zM243.9,131.7h1v1h-1zM262.6,131.7h1v1h-1zM281.2,131.7h1v1h-1zM299.9,131.7h1v1h-1zM318.5,131.7h1v1h-1zM337.1,131.7h1v1h-1zM355.8,131.7h1v1h-1zM374.4,131.7h1v1h-1zM393.1,131.7h1v1h-1zM411.8,131.7h1v1h-1zM430.4,131.7h1v1h-1zM449.1,131.7h1v1h-1zM467.7,131.7h1v1h-1zM486.3,131.7h1v1h-1zM505.0,131.7h1v1h-1zM523.6,131.7h1v1h-1zM169.3,146.9h1v1h-1zM188.0,146.9h1v1h-1zM206.6,146.9h1v1h-1zM225.2,146.9h1v1h-1zM243.9,146.9h1v1h-1zM262.6,146.9h1v1h-1zM281.2,146.9h1v1h-1zM299.9,146.9h1v1h-1zM318.5,146.9h1v1h-1zM337.1,146.9h1v1h-1zM355.8,146.9h1v1h-1zM374.4,146.9h1v1h-1zM393.1,146.9h1v1h-1zM411.8,146.9h1v1h-1zM430.4,146.9h1v1h-1zM449.1,146.9h1v1h-1zM467.7,146.9h1v1h-1zM486.3,146.9h1v1h-1zM505.0,146.9h1v1h-1zM523.6,146.9h1v1h-1zM169.3,162.1h1v1h-1zM188.0,162.1h1v1h-1zM206.6,162.1h1v1h-1zM225.2,162.1h1v1h-1zM243.9,162.1h1v1h-1zM262.6,162.1h1v1h-1zM281.2,162.1h1v1h-1zM299.9,162.1h1v1h-1zM318.5,162.1h1v1h-1zM337.1,162.1h1v1h-1zM355.8,162.1h1v1h-1zM374.4,162.1h1v1h-1zM393.1,162.1h1v1h-1zM411.8,162.1h1v1h-1zM430.4,162.1h1v1h-1zM449.1,162.1h1v1h-1zM467.7,162.1h1v1h-1zM486.3,162.1h1v1h-1zM505.0,162.1h1v1h-1zM523.6,162.1h1v1h-1zM169.3,177.3h1v1h-1zM188.0,177.3h1v1h-1zM206.6,177.3h1v1h-1zM225.2,177.3h1v1h-1zM243.9,177.3h1v1h-1zM262.6,177.3h1v1h-1zM281.2,177.3h1v1h-1zM299.9,177.3h1v1h-1zM318.5,177.3h1v1h-1zM337.1,177.3h1v1h-1zM355.8,177.3h1v1h-1zM374.4,177.3h1v1h-1zM393.1,177.3h1v1h-1zM411.8,177.3h1v1h-1zM430.4,177.3h1v1h-1zM449.1,177.3h1v1h-1zM467.7,177.3h1v1h-1zM486.3,177.3h1v1h-1zM505.0,177.3h1v1h-1zM523.6,177.3h1v1h-1zM169.3,192.5h1v1h-1zM188.0,192.5h1v1h-1zM206.6,192.5h1v1h-1zM225.2,192.5h1v1h-1zM243.9,192.5h1v1h-1zM262.6,192.5h1v1h-1zM281.2,192.5h1v1h-1zM299.9,192.5h1v1h-1zM318.5,192.5h1v1h-1zM337.1,192.5h1v1h-1zM355.8,192.5h1v1h-1zM374.4,192.5h1v1h-1zM393.1,192.5h1v1h-1zM411.8,192.5h1v1h-1zM430.4,192.5h1v1h-1zM449.1,192.5h1v1h-1zM467.7,192.5h1v1h-1zM486.3,192.5h1v1h-1zM505.0,192.5h1v1h-1zM523.6,192.5h1v1h-1zM169.3,207.7h1v1h-1zM188.0,207.7h1v1h-1zM206.6,207.7h1v1h-1zM225.2,207.7h1v1h-1zM243.9,207.7h1v1h-1zM262.6,207.7h1v1h-1zM281.2,207.7h1v1h-1zM299.9,207.7h1v1h-1zM318.5,207.7h1v1h-1zM337.1,207.7h1v1h-1zM355.8,207.7h1v1h-1zM374.4,207.7h1v1h-1zM393.1,207.7h1v1h-1zM411.8,207.7h1v1h-1zM430.4,207.7h1v1h-1zM449.1,207.7h1v1h-1zM467.7,207.7h1v1h-1zM486.3,207.7h1v1h-1zM505.0,207.7h1v1h-1zM523.6,207.7h1v1h-1zM169.3,222.9h1v1h-1zM188.0,222.9h1v1h-1zM206.6,222.9h1v1h-1zM225.2,222.9h1v1h-1zM243.9,222.9h1v1h-1zM262.6,222.9h1v1h-1zM281.2,222.9h1v1h-1zM299.9,222.9h1v1h-1zM318.5,222.9h1v1h-1zM337.1,222.9h1v1h-1zM355.8,222.9h1v1h-1zM374.4,222.9h1v1h-1zM393.1,222.9h1v1h-1zM411.8,222.9h1v1h-1zM430.4,222.9h1v1h-1zM449.1,222.9h1v1h-1zM467.7,222.9h1v1h-1zM486.3,222.9h1v1h-1zM505.0,222.9h1v1h-1zM523.6,222.9h1v1h-1zM169.3,238.1h1v1h-1zM188.0,238.1h1v1h-1zM206.6,238.1h1v1h-1zM225.2,238.1h1v1h-1zM243.9,238.1h1v1h-1zM262.6,238.1h1v1h-1zM281.2,238.1h1v1h-1zM299.9,238.1h1v1h-1zM318.5,238.1h1v1h-1zM337.1,238.1h1v1h-1zM355.8,238.1h1v1h-1zM374.4,238.1h1v1h-1zM393.1,238.1h1v1h-1zM411.8,238.1h1v1h-1zM430.4,238.1h1v1h-1zM449.1,238.1h1v1h-1zM467.7,238.1h1v1h-1zM486.3,238.1h1v1h-1zM505.0,238.1h1v1h-1zM523.6,238.1h1v1h-1z" fill="#45457a"/><path d="M151,155.2 H525 M151,168.3 H525" stroke="#34344e" stroke-width="0.7" stroke-dasharray="1,1"/><path d="M150.5,158 L151.8,156 L154.2,160 L156,157 L158,162 L160.5,163.5 L166,164 L166.8,158.5 L167.6,165.5 L168.5,163.8 L185.5,163.6 L188,160.5 L191.7,165 L194.2,160.5 L196.7,166.8 L199.2,157.5 L201.8,165 L205.5,164 L220,163.6 L261.7,163.4 L264.2,158.5 L266.7,166.5 L268.7,160.5 L269.7,170 L271,153 L272.2,168 L273.5,152 L274.8,164 L278,163.5 L300.5,163.4 L302,164.5 L304.2,168 L306,169 L309.2,161.5 L313,163.4 L330,163.5 L331.7,159.5 L333,166 L335,163.4 L338,163.5 L369,163.4 L371.2,161 L373.7,164.5 L377.5,161 L381.2,165 L386.2,162 L390,157 L392.5,165.5 L397.5,163.4 L407.5,163.4 L408.7,158 L410,155 L411.2,167 L412.5,173 L414.2,162 L416.2,158 L418,162 L420,158 L423,164 L426,163.4 L458.7,163.4 L460,167 L461.7,168.5 L463.7,161 L466.2,164 L476.2,163.2 L479,163 L481.2,152 L482.5,168 L483.7,153 L484.5,168 L486.2,163 L510,163.4 L512.5,159 L515,166 L518,160 L520.5,166 L523.7,160 L525,163" fill="none" stroke="#aaa236" stroke-width="0.85" stroke-linejoin="round"/><path d="M151,155.5 l1.6,2.8 h-3.2z" fill="#3fd6e8"/><text x="520.8" y="159" font-size="5" fill="#ddd" text-anchor="start" font-weight="normal">1</text><line x1="150.3" y1="37" x2="150.3" y2="310" stroke="#2a5fb8" stroke-width="0.6"/><path d="M155.2,89 l1.7,1.7 -1.7,1.7 -1.7,-1.7z" fill="none" stroke="#2aa8b8" stroke-width="0.6"/><text x="162.2" y="93.3" font-size="6.6" fill="#e8e8e8" text-anchor="start" font-weight="normal" textLength="15" lengthAdjust="spacingAndGlyphs">1mV/D</text><path d="M182.3,89 l1.7,1.7 -1.7,1.7 -1.7,-1.7z" fill="none" stroke="#2aa8b8" stroke-width="0.6"/><text x="318.5" y="92.6" font-size="6.2" fill="#eee" text-anchor="start" font-weight="normal" textLength="39.3" lengthAdjust="spacingAndGlyphs">L Tibialis anterior</text><path d="M488,89 l1.7,1.7 -1.7,1.7 -1.7,-1.7z" fill="none" stroke="#2aa8b8" stroke-width="0.6"/><text x="491.5" y="93.3" font-size="6.6" fill="#eee" text-anchor="start" font-weight="normal" textLength="18" lengthAdjust="spacingAndGlyphs">10ms/D</text><path d="M514.5,89 l1.7,1.7 -1.7,1.7 -1.7,-1.7z" fill="none" stroke="#2aa8b8" stroke-width="0.6"/><rect x="151" y="238.2" width="18.6" height="2.6" fill="#1fae5a"/><rect x="188.8" y="238.2" width="18.0" height="2.6" fill="#1fae5a"/><rect x="263" y="238.2" width="18.0" height="2.6" fill="#1fae5a"/><rect x="375" y="238.2" width="18.0" height="2.6" fill="#1fae5a"/><rect x="393.8" y="238.2" width="17.8" height="2.6" fill="#1fae5a"/><rect x="412.4" y="238.2" width="18.6" height="2.6" fill="#1fae5a"/><rect x="468" y="238.2" width="19.0" height="2.6" fill="#e8e820"/><rect x="505.8" y="238.2" width="18.0" height="2.6" fill="#1fae5a"/><rect x="150" y="241.3" width="376" height="16.2" fill="#efefef"/><line x1="150" y1="241.6" x2="526" y2="241.6" stroke="#cfe0f0" stroke-width="0.6"/><rect x="150.6" y="242" width="19.2" height="15" fill="#f6f6f6" stroke="#e0e0e0" stroke-width="0.4"/><text x="158.6" y="252.2" font-size="6.4" fill="#111" text-anchor="start" font-weight="normal" stroke="#111" stroke-width="0.05">1</text><rect x="170.5" y="242" width="12.5" height="15" fill="#fafafa" stroke="#dcdcdc" stroke-width="0.4"/><path d="M172.4,243.4 L182.4,249.5 L172.4,255.6 Z" fill="#1428b4"/><circle cx="176" cy="249.7" r="2.3" fill="#d42020"/><path d="M185.6,243.2 l4.4,3.1 -4.4,3.1z" fill="#d42020"/><rect x="190" y="243.2" width="1.6" height="6.2" fill="#d42020"/><path d="M186.2,252 h5 l-2.5,2.8z" fill="#3a3a3a"/><line x1="194.9" y1="249.6" x2="242.4" y2="249.6" stroke="#bdbdbd" stroke-width="0.8"/><rect x="224.6" y="246.4" width="2.2" height="6.4" rx="1" fill="#1b2a8a"/><text x="244.8" y="247.4" font-size="4.2" fill="#333" text-anchor="start" font-weight="normal" textLength="9.3" lengthAdjust="spacingAndGlyphs" stroke="#333" stroke-width="0.05">60.0s</text><text x="244.8" y="255.2" font-size="4.2" fill="#333" text-anchor="start" font-weight="normal" textLength="6.2" lengthAdjust="spacingAndGlyphs" stroke="#333" stroke-width="0.05">60s</text><path d="M259.6,252.4 h4.6 l-2.3,2.8z" fill="#2a2a2a"/><rect x="266.3" y="241.8" width="13.4" height="15.4" fill="#f8f8f8" stroke="#e2e2e2" stroke-width="0.4"/><path d="M268.6,244 h7.4 l1.6,1.6 v9 h-9z" fill="#2333b2"/><rect x="270.4" y="244" width="4.6" height="2.6" fill="#e8e8f8"/><rect x="270" y="249.2" width="6.2" height="4.2" fill="#c8ccf0"/><line x1="270" y1="251.3" x2="276.2" y2="251.3" stroke="#2333b2" stroke-width="0.4"/><rect x="281.3" y="242.6" width="6" height="6" rx="0.6" fill="#fafafa" stroke="#cfcfcf" stroke-width="0.5"/><path d="M281.8,252.3 h4.6 l-2.3,2.8z" fill="#2a2a2a"/><line x1="290" y1="253.1" x2="349" y2="253.1" stroke="#888" stroke-width="0.4"/><line x1="293.0" y1="252.2" x2="293.0" y2="253.1" stroke="#777" stroke-width="0.4"/><text x="291.8" y="256.6" font-size="2.4" fill="#666" text-anchor="start" font-weight="normal">0.1</text><line x1="302.2" y1="252.2" x2="302.2" y2="253.1" stroke="#777" stroke-width="0.4"/><text x="301.0" y="256.6" font-size="2.4" fill="#666" text-anchor="start" font-weight="normal">0.3</text><line x1="311.4" y1="252.2" x2="311.4" y2="253.1" stroke="#777" stroke-width="0.4"/><text x="310.2" y="256.6" font-size="2.4" fill="#666" text-anchor="start" font-weight="normal">0.5</text><line x1="320.6" y1="252.2" x2="320.6" y2="253.1" stroke="#777" stroke-width="0.4"/><text x="319.40000000000003" y="256.6" font-size="2.4" fill="#666" text-anchor="start" font-weight="normal">0.7</text><line x1="329.8" y1="252.2" x2="329.8" y2="253.1" stroke="#777" stroke-width="0.4"/><text x="328.6" y="256.6" font-size="2.4" fill="#666" text-anchor="start" font-weight="normal">0.9</text><line x1="339.0" y1="252.2" x2="339.0" y2="253.1" stroke="#777" stroke-width="0.4"/><text x="337.8" y="256.6" font-size="2.4" fill="#666" text-anchor="start" font-weight="normal">0.11</text><line x1="348.2" y1="252.2" x2="348.2" y2="253.1" stroke="#777" stroke-width="0.4"/><text x="347.0" y="256.6" font-size="2.4" fill="#666" text-anchor="start" font-weight="normal">0.13</text><text x="350" y="246.5" font-size="5" fill="#222" text-anchor="start" font-weight="normal" stroke="#222" stroke-width="0.05">0</text><text x="370.3" y="246.5" font-size="5" fill="#222" text-anchor="start" font-weight="normal" textLength="14.7" lengthAdjust="spacingAndGlyphs" stroke="#222" stroke-width="0.05">Fullness</text><text x="399.4" y="246.5" font-size="5" fill="#222" text-anchor="start" font-weight="normal" textLength="6.9" lengthAdjust="spacingAndGlyphs" stroke="#222" stroke-width="0.05">100</text><text x="408.5" y="246.5" font-size="5" fill="#222" text-anchor="start" font-weight="normal" textLength="7.3" lengthAdjust="spacingAndGlyphs" stroke="#222" stroke-width="0.05">100</text><text x="427" y="246.5" font-size="5" fill="#222" text-anchor="start" font-weight="normal" textLength="18.5" lengthAdjust="spacingAndGlyphs" stroke="#222" stroke-width="0.05">Amplitude</text><text x="453.8" y="246.5" font-size="5" fill="#222" text-anchor="start" font-weight="normal" textLength="11.5" lengthAdjust="spacingAndGlyphs" stroke="#222" stroke-width="0.05">10000</text><text x="467.9" y="246.5" font-size="5" fill="#222" text-anchor="start" font-weight="normal" textLength="6.6" lengthAdjust="spacingAndGlyphs" stroke="#222" stroke-width="0.05">100</text><text x="491.3" y="246.5" font-size="5" fill="#222" text-anchor="start" font-weight="normal" textLength="9.3" lengthAdjust="spacingAndGlyphs" stroke="#222" stroke-width="0.05">Pitch</text><text x="517.5" y="246.5" font-size="5" fill="#222" text-anchor="start" font-weight="normal" textLength="6.9" lengthAdjust="spacingAndGlyphs" stroke="#222" stroke-width="0.05">500</text><rect x="349" y="249.9" width="57.2" height="7.4" fill="#f3f3f3" stroke="#c9c9c9" stroke-width="0.5"/><rect x="349.3" y="250.2" width="22.3" height="6.8" fill="#199ff0"/><rect x="408.1" y="249.9" width="57.3" height="7.4" fill="#f3f3f3" stroke="#c9c9c9" stroke-width="0.5"/><rect x="408.40000000000003" y="250.2" width="26.4" height="6.8" fill="#f8b400"/><rect x="467.3" y="249.9" width="57.1" height="7.4" fill="#f3f3f3" stroke="#c9c9c9" stroke-width="0.5"/><rect x="467.6" y="250.2" width="32.0" height="6.8" fill="#f7b07c"/><rect x="150" y="257.5" width="376" height="7.8" fill="#fdfdfd"/><text x="151" y="263.2" font-size="4.6" fill="#999" text-anchor="start" font-weight="normal" textLength="18" lengthAdjust="spacingAndGlyphs">LongTrace</text><path d="M509.5,259.6 l2.2,2.2 M510.6,260.7 l-1.6,1.6 M511,259.4 l1.4,1.4" stroke="#999" stroke-width="0.5"/><rect x="518.8" y="259.4" width="3.6" height="3.6" rx="0.5" fill="none" stroke="#999" stroke-width="0.5"/><rect x="150" y="265.2" width="375.5" height="44.9" fill="#000"/><path d="M169.3,269.4h0.9v0.9h-0.9zM169.3,273.8h0.9v0.9h-0.9zM169.3,278.2h0.9v0.9h-0.9zM169.3,282.6h0.9v0.9h-0.9zM169.3,287.0h0.9v0.9h-0.9zM169.3,291.5h0.9v0.9h-0.9zM169.3,295.9h0.9v0.9h-0.9zM169.3,300.3h0.9v0.9h-0.9zM169.3,304.7h0.9v0.9h-0.9zM169.3,309.1h0.9v0.9h-0.9zM188.0,269.4h0.9v0.9h-0.9zM188.0,273.8h0.9v0.9h-0.9zM188.0,278.2h0.9v0.9h-0.9zM188.0,282.6h0.9v0.9h-0.9zM188.0,287.0h0.9v0.9h-0.9zM188.0,291.5h0.9v0.9h-0.9zM188.0,295.9h0.9v0.9h-0.9zM188.0,300.3h0.9v0.9h-0.9zM188.0,304.7h0.9v0.9h-0.9zM188.0,309.1h0.9v0.9h-0.9zM206.6,269.4h0.9v0.9h-0.9zM206.6,273.8h0.9v0.9h-0.9zM206.6,278.2h0.9v0.9h-0.9zM206.6,282.6h0.9v0.9h-0.9zM206.6,287.0h0.9v0.9h-0.9zM206.6,291.5h0.9v0.9h-0.9zM206.6,295.9h0.9v0.9h-0.9zM206.6,300.3h0.9v0.9h-0.9zM206.6,304.7h0.9v0.9h-0.9zM206.6,309.1h0.9v0.9h-0.9zM225.2,269.4h0.9v0.9h-0.9zM225.2,273.8h0.9v0.9h-0.9zM225.2,278.2h0.9v0.9h-0.9zM225.2,282.6h0.9v0.9h-0.9zM225.2,287.0h0.9v0.9h-0.9zM225.2,291.5h0.9v0.9h-0.9zM225.2,295.9h0.9v0.9h-0.9zM225.2,300.3h0.9v0.9h-0.9zM225.2,304.7h0.9v0.9h-0.9zM225.2,309.1h0.9v0.9h-0.9zM243.9,269.4h0.9v0.9h-0.9zM243.9,273.8h0.9v0.9h-0.9zM243.9,278.2h0.9v0.9h-0.9zM243.9,282.6h0.9v0.9h-0.9zM243.9,287.0h0.9v0.9h-0.9zM243.9,291.5h0.9v0.9h-0.9zM243.9,295.9h0.9v0.9h-0.9zM243.9,300.3h0.9v0.9h-0.9zM243.9,304.7h0.9v0.9h-0.9zM243.9,309.1h0.9v0.9h-0.9zM262.6,269.4h0.9v0.9h-0.9zM262.6,273.8h0.9v0.9h-0.9zM262.6,278.2h0.9v0.9h-0.9zM262.6,282.6h0.9v0.9h-0.9zM262.6,287.0h0.9v0.9h-0.9zM262.6,291.5h0.9v0.9h-0.9zM262.6,295.9h0.9v0.9h-0.9zM262.6,300.3h0.9v0.9h-0.9zM262.6,304.7h0.9v0.9h-0.9zM262.6,309.1h0.9v0.9h-0.9zM281.2,269.4h0.9v0.9h-0.9zM281.2,273.8h0.9v0.9h-0.9zM281.2,278.2h0.9v0.9h-0.9zM281.2,282.6h0.9v0.9h-0.9zM281.2,287.0h0.9v0.9h-0.9zM281.2,291.5h0.9v0.9h-0.9zM281.2,295.9h0.9v0.9h-0.9zM281.2,300.3h0.9v0.9h-0.9zM281.2,304.7h0.9v0.9h-0.9zM281.2,309.1h0.9v0.9h-0.9zM299.9,269.4h0.9v0.9h-0.9zM299.9,273.8h0.9v0.9h-0.9zM299.9,278.2h0.9v0.9h-0.9zM299.9,282.6h0.9v0.9h-0.9zM299.9,287.0h0.9v0.9h-0.9zM299.9,291.5h0.9v0.9h-0.9zM299.9,295.9h0.9v0.9h-0.9zM299.9,300.3h0.9v0.9h-0.9zM299.9,304.7h0.9v0.9h-0.9zM299.9,309.1h0.9v0.9h-0.9zM318.5,269.4h0.9v0.9h-0.9zM318.5,273.8h0.9v0.9h-0.9zM318.5,278.2h0.9v0.9h-0.9zM318.5,282.6h0.9v0.9h-0.9zM318.5,287.0h0.9v0.9h-0.9zM318.5,291.5h0.9v0.9h-0.9zM318.5,295.9h0.9v0.9h-0.9zM318.5,300.3h0.9v0.9h-0.9zM318.5,304.7h0.9v0.9h-0.9zM318.5,309.1h0.9v0.9h-0.9zM337.1,269.4h0.9v0.9h-0.9zM337.1,273.8h0.9v0.9h-0.9zM337.1,278.2h0.9v0.9h-0.9zM337.1,282.6h0.9v0.9h-0.9zM337.1,287.0h0.9v0.9h-0.9zM337.1,291.5h0.9v0.9h-0.9zM337.1,295.9h0.9v0.9h-0.9zM337.1,300.3h0.9v0.9h-0.9zM337.1,304.7h0.9v0.9h-0.9zM337.1,309.1h0.9v0.9h-0.9zM355.8,269.4h0.9v0.9h-0.9zM355.8,273.8h0.9v0.9h-0.9zM355.8,278.2h0.9v0.9h-0.9zM355.8,282.6h0.9v0.9h-0.9zM355.8,287.0h0.9v0.9h-0.9zM355.8,291.5h0.9v0.9h-0.9zM355.8,295.9h0.9v0.9h-0.9zM355.8,300.3h0.9v0.9h-0.9zM355.8,304.7h0.9v0.9h-0.9zM355.8,309.1h0.9v0.9h-0.9zM374.4,269.4h0.9v0.9h-0.9zM374.4,273.8h0.9v0.9h-0.9zM374.4,278.2h0.9v0.9h-0.9zM374.4,282.6h0.9v0.9h-0.9zM374.4,287.0h0.9v0.9h-0.9zM374.4,291.5h0.9v0.9h-0.9zM374.4,295.9h0.9v0.9h-0.9zM374.4,300.3h0.9v0.9h-0.9zM374.4,304.7h0.9v0.9h-0.9zM374.4,309.1h0.9v0.9h-0.9zM393.1,269.4h0.9v0.9h-0.9zM393.1,273.8h0.9v0.9h-0.9zM393.1,278.2h0.9v0.9h-0.9zM393.1,282.6h0.9v0.9h-0.9zM393.1,287.0h0.9v0.9h-0.9zM393.1,291.5h0.9v0.9h-0.9zM393.1,295.9h0.9v0.9h-0.9zM393.1,300.3h0.9v0.9h-0.9zM393.1,304.7h0.9v0.9h-0.9zM393.1,309.1h0.9v0.9h-0.9zM411.8,269.4h0.9v0.9h-0.9zM411.8,273.8h0.9v0.9h-0.9zM411.8,278.2h0.9v0.9h-0.9zM411.8,282.6h0.9v0.9h-0.9zM411.8,287.0h0.9v0.9h-0.9zM411.8,291.5h0.9v0.9h-0.9zM411.8,295.9h0.9v0.9h-0.9zM411.8,300.3h0.9v0.9h-0.9zM411.8,304.7h0.9v0.9h-0.9zM411.8,309.1h0.9v0.9h-0.9zM430.4,269.4h0.9v0.9h-0.9zM430.4,273.8h0.9v0.9h-0.9zM430.4,278.2h0.9v0.9h-0.9zM430.4,282.6h0.9v0.9h-0.9zM430.4,287.0h0.9v0.9h-0.9zM430.4,291.5h0.9v0.9h-0.9zM430.4,295.9h0.9v0.9h-0.9zM430.4,300.3h0.9v0.9h-0.9zM430.4,304.7h0.9v0.9h-0.9zM430.4,309.1h0.9v0.9h-0.9zM449.1,269.4h0.9v0.9h-0.9zM449.1,273.8h0.9v0.9h-0.9zM449.1,278.2h0.9v0.9h-0.9zM449.1,282.6h0.9v0.9h-0.9zM449.1,287.0h0.9v0.9h-0.9zM449.1,291.5h0.9v0.9h-0.9zM449.1,295.9h0.9v0.9h-0.9zM449.1,300.3h0.9v0.9h-0.9zM449.1,304.7h0.9v0.9h-0.9zM449.1,309.1h0.9v0.9h-0.9zM467.7,269.4h0.9v0.9h-0.9zM467.7,273.8h0.9v0.9h-0.9zM467.7,278.2h0.9v0.9h-0.9zM467.7,282.6h0.9v0.9h-0.9zM467.7,287.0h0.9v0.9h-0.9zM467.7,291.5h0.9v0.9h-0.9zM467.7,295.9h0.9v0.9h-0.9zM467.7,300.3h0.9v0.9h-0.9zM467.7,304.7h0.9v0.9h-0.9zM467.7,309.1h0.9v0.9h-0.9zM486.3,269.4h0.9v0.9h-0.9zM486.3,273.8h0.9v0.9h-0.9zM486.3,278.2h0.9v0.9h-0.9zM486.3,282.6h0.9v0.9h-0.9zM486.3,287.0h0.9v0.9h-0.9zM486.3,291.5h0.9v0.9h-0.9zM486.3,295.9h0.9v0.9h-0.9zM486.3,300.3h0.9v0.9h-0.9zM486.3,304.7h0.9v0.9h-0.9zM486.3,309.1h0.9v0.9h-0.9zM505.0,269.4h0.9v0.9h-0.9zM505.0,273.8h0.9v0.9h-0.9zM505.0,278.2h0.9v0.9h-0.9zM505.0,282.6h0.9v0.9h-0.9zM505.0,287.0h0.9v0.9h-0.9zM505.0,291.5h0.9v0.9h-0.9zM505.0,295.9h0.9v0.9h-0.9zM505.0,300.3h0.9v0.9h-0.9zM505.0,304.7h0.9v0.9h-0.9zM505.0,309.1h0.9v0.9h-0.9zM523.6,269.4h0.9v0.9h-0.9zM523.6,273.8h0.9v0.9h-0.9zM523.6,278.2h0.9v0.9h-0.9zM523.6,282.6h0.9v0.9h-0.9zM523.6,287.0h0.9v0.9h-0.9zM523.6,291.5h0.9v0.9h-0.9zM523.6,295.9h0.9v0.9h-0.9zM523.6,300.3h0.9v0.9h-0.9zM523.6,304.7h0.9v0.9h-0.9zM523.6,309.1h0.9v0.9h-0.9z" fill="#4a4a88"/><path d="M152.10,287.64 L153.70,287.83 L155.30,287.72 L156.90,287.86 L158.50,287.88 L160.10,287.54 L161.70,287.51 L163.30,288.00 L164.90,287.66 L166.50,287.64 L168.10,288.10 L169.70,287.78 L171.30,288.00 L172.90,287.79 L174.50,287.88 L176.10,287.59 L177.70,287.88 L179.30,288.02 L180.90,287.81 L182.50,287.94 L184.10,287.90 L185.70,287.54 L187.30,287.95 L188.90,287.85 L190.50,287.68 L192.10,287.52 L193.70,288.02 L195.30,287.78 L196.90,287.93 L198.50,288.03 L200.10,287.93 L201.70,288.05 L203.30,287.74 L204.90,287.98 L206.50,287.77 L207.05,286.80 L207.60,288.90 L208.15,287.15 L208.70,288.53 L209.25,286.95 L209.80,289.35 L210.35,286.66 L210.90,289.17 L211.45,286.69 L212.00,289.16 L212.55,286.53 L213.10,289.07 L213.65,286.23 L214.20,289.41 L214.75,285.77 L215.30,289.61 L215.85,285.64 L216.40,289.91 L216.95,285.47 L217.50,289.75 L218.05,286.49 L218.60,290.08 L219.15,285.34 L219.70,290.21 L220.25,285.83 L220.80,290.01 L221.35,286.29 L221.90,290.25 L222.45,285.62 L223.00,289.63 L223.55,286.25 L224.10,290.90 L224.65,284.27 L225.20,289.66 L225.75,284.32 L226.30,290.56 L226.85,285.53 L227.40,290.52 L227.95,283.76 L228.50,292.27 L229.05,285.43 L229.60,291.88 L230.15,285.26 L230.70,292.49 L231.25,284.18 L231.80,293.33 L232.35,281.76 L232.90,292.38 L233.45,281.33 L234.00,291.93 L234.55,284.43 L235.10,293.29 L235.65,284.42 L236.20,291.94 L236.75,282.67 L237.30,293.93 L237.85,283.52 L238.40,291.67 L238.95,280.04 L239.50,293.13 L240.05,279.24 L240.60,296.24 L241.15,281.79 L241.70,294.37 L242.25,280.78 L242.80,295.62 L243.35,280.09 L243.90,295.46 L244.45,279.64 L245.00,297.96 L245.55,280.00 L246.10,295.29 L246.65,278.41 L247.20,294.36 L247.75,280.73 L248.30,299.35 L248.85,279.04 L249.40,296.88 L249.95,282.20 L250.50,296.27 L251.05,278.39 L251.60,293.31 L252.15,278.61 L252.70,296.87 L253.25,282.45 L253.80,296.38 L254.35,280.38 L254.90,296.22 L255.45,281.40 L256.00,295.89 L256.55,279.78 L257.10,292.00 L257.65,283.55 L258.20,294.80 L258.75,279.73 L259.30,292.48 L259.85,282.42 L260.40,293.54 L260.95,283.34 L261.50,292.25 L262.05,283.71 L262.60,291.92 L263.15,283.11 L263.70,291.34 L264.25,284.19 L264.80,292.36 L265.35,285.50 L265.90,291.37 L266.45,284.03 L267.00,290.38 L267.55,285.57 L268.10,291.04 L268.65,285.84 L269.20,289.52 L269.75,285.83 L270.30,289.97 L270.85,286.61 L271.40,289.12 L271.95,286.62 L272.50,289.27 L273.05,286.85 L273.60,288.85 L274.15,287.31 L274.70,288.23 L276.30,287.89 L277.90,288.03 L279.50,287.77 L281.10,287.64 L282.70,287.57 L284.30,287.82 L285.90,287.61 L287.50,287.98 L289.10,288.00 L290.70,287.61 L292.30,287.67 L293.90,287.98 L295.50,287.89 L297.10,287.98 L298.70,287.71 L300.30,287.58 L301.90,287.68 L303.50,287.98 L305.10,287.66 L306.70,287.71 L308.30,287.75 L309.90,287.75 L311.50,287.75 L313.10,288.05 L314.70,287.59 L316.30,287.50 L317.90,288.07 L319.50,288.03 L321.10,288.09 L322.70,287.76 L324.30,288.07 L325.90,288.06 L327.50,287.63 L329.10,287.95 L330.70,288.00 L332.30,287.90 L333.90,287.81 L335.50,287.67 L337.10,287.70 L338.70,287.64 L340.30,287.54 L341.90,287.85 L343.50,287.67 L345.10,287.99 L346.70,287.53 L348.30,288.04 L349.90,287.92 L351.50,288.05 L353.10,288.04 L354.70,288.04 L356.30,287.85 L357.90,287.51 L359.50,287.95 L361.10,287.60 L362.70,287.68 L364.30,287.90 L365.90,287.81 L367.50,287.75 L368.05,286.85 L368.60,288.67 L369.15,287.02 L369.70,288.58 L370.25,286.50 L370.80,288.86 L371.35,286.43 L371.90,288.85 L372.45,286.85 L373.00,289.11 L373.55,286.17 L374.10,288.82 L374.65,286.10 L375.20,289.69 L375.75,285.99 L376.30,289.67 L376.85,286.84 L377.40,289.52 L377.95,285.76 L378.50,288.87 L379.05,286.43 L379.60,289.19 L380.15,286.05 L380.70,289.44 L381.25,286.07 L381.80,289.97 L382.35,286.67 L382.90,289.02 L383.45,286.46 L384.00,289.15 L384.55,286.51 L385.10,290.44 L385.65,285.31 L386.20,289.16 L386.75,285.79 L387.30,289.55 L387.85,286.04 L388.40,289.64 L388.95,285.47 L389.50,290.11 L390.05,285.79 L390.60,289.59 L391.15,285.69 L391.70,289.59 L392.25,285.10 L392.80,290.92 L393.35,285.28 L393.90,289.75 L394.45,285.57 L395.00,290.54 L395.55,284.43 L396.10,291.70 L396.65,284.80 L397.20,291.97 L397.75,283.99 L398.30,291.19 L398.85,284.49 L399.40,291.55 L399.95,283.35 L400.50,291.51 L401.05,283.16 L401.60,291.81 L402.15,284.39 L402.70,292.24 L403.25,282.73 L403.80,290.85 L404.35,283.45 L404.90,292.24 L405.45,281.62 L406.00,294.32 L406.55,283.28 L407.10,294.43 L407.65,281.47 L408.20,292.13 L408.75,282.56 L409.30,291.71 L409.85,280.89 L410.40,294.18 L410.95,280.32 L411.50,294.98 L412.05,281.06 L412.60,294.96 L413.15,281.32 L413.70,292.19 L414.25,281.00 L414.80,291.85 L415.35,283.00 L415.90,295.87 L416.45,283.36 L417.00,292.55 L417.55,282.93 L418.10,296.94 L418.65,282.36 L419.20,292.46 L419.75,278.48 L420.30,293.15 L420.85,278.20 L421.40,296.53 L421.95,277.99 L422.50,298.44 L423.05,279.29 L423.60,297.78 L424.15,282.46 L424.70,297.84 L425.25,279.28 L425.80,297.75 L426.35,281.72 L426.90,297.87 L427.45,277.01 L428.00,292.98 L428.55,281.38 L429.10,295.21 L429.65,279.41 L430.20,292.93 L430.75,283.23 L431.30,292.42 L431.85,281.96 L432.40,293.81 L432.95,283.47 L433.50,291.75 L434.05,284.05 L434.60,291.13 L435.15,284.57 L435.70,289.95 L436.25,284.96 L436.80,291.26 L437.35,285.69 L437.90,290.15 L438.45,286.54 L439.00,289.44 L439.55,286.41 L440.10,288.84 L440.65,287.12 L441.20,288.24 L442.80,287.89 L444.40,288.04 L446.00,287.59 L447.60,287.56 L449.20,287.95 L450.80,288.05 L452.40,287.81 L454.00,287.77 L455.60,287.93 L457.20,287.61 L457.75,287.13 L458.30,288.53 L458.85,286.68 L459.40,288.79 L459.95,286.82 L460.50,289.30 L461.05,285.94 L461.60,289.02 L462.15,286.06 L462.70,289.26 L463.25,285.75 L463.80,289.58 L464.35,286.38 L464.90,289.19 L465.45,286.64 L466.00,289.63 L466.55,286.07 L467.10,289.26 L467.65,286.03 L468.20,289.55 L468.75,285.31 L469.30,289.33 L469.85,284.88 L470.40,289.93 L470.95,285.48 L471.50,290.05 L472.05,284.71 L472.60,291.07 L473.15,284.90 L473.70,290.70 L474.25,284.18 L474.80,291.95 L475.35,284.63 L475.90,292.02 L476.45,282.74 L477.00,291.62 L477.55,284.56 L478.10,291.19 L478.65,282.66 L479.20,292.98 L479.75,281.41 L480.30,294.03 L480.85,283.72 L481.40,291.81 L481.95,283.38 L482.50,292.06 L483.05,281.16 L483.60,295.33 L484.15,279.86 L484.70,292.90 L485.25,279.59 L485.80,293.47 L486.35,281.42 L486.90,295.96 L487.45,282.92 L488.00,292.84 L488.55,278.44 L489.10,294.23 L489.65,280.83 L490.20,296.28 L490.75,278.55 L491.30,293.02 L491.85,280.35 L492.40,296.07 L492.95,279.03 L493.50,294.86 L494.05,278.43 L494.60,299.25 L495.15,280.25 L495.70,296.01 L496.25,282.36 L496.80,293.91 L497.35,279.82 L497.90,292.61 L498.45,279.35 L499.00,295.99 L499.55,283.66 L500.10,295.40 L500.65,282.90 L501.20,294.00 L501.75,281.98 L502.30,291.68 L502.85,282.90 L503.40,292.33 L503.95,283.13 L504.50,290.70 L505.05,283.91 L505.60,291.85 L506.15,284.70 L506.70,290.35 L507.25,286.23 L507.80,289.76 L508.35,286.27 L508.90,289.52 L509.45,286.40 L510.00,288.85 L510.55,287.22 L511.10,288.39 L512.70,287.88 L514.30,287.61 L515.90,288.03 L517.50,287.89 L519.10,287.57 L520.70,288.06 L522.30,287.58 L523.90,287.70 L525.50,287.93" fill="none" stroke="#d0d0d0" stroke-width="0.45"/><path d="M333.8,287.8 L334.2,280 L334.6,295 L335,287.8" fill="none" stroke="#ddd" stroke-width="0.6"/><line x1="394.2" y1="265.2" x2="394.2" y2="310" stroke="#cfcfcf" stroke-width="0.8"/><rect x="252.5" y="306.6" width="1.3" height="3.4" fill="#f0e020"/><rect x="270.0" y="306.6" width="1.3" height="3.4" fill="#f0e020"/><rect x="394.4" y="306.6" width="1.3" height="3.4" fill="#f0e020"/><rect x="396.59999999999997" y="306.6" width="1.3" height="3.4" fill="#f0e020"/><rect x="401.2" y="306.6" width="1.3" height="3.4" fill="#f0e020"/><rect x="404.4" y="306.6" width="1.3" height="3.4" fill="#f0e020"/><rect x="413.4" y="306.6" width="1.3" height="3.4" fill="#f0e020"/><rect x="419.4" y="306.6" width="1.3" height="3.4" fill="#f0e020"/><rect x="476.4" y="306.6" width="1.3" height="3.4" fill="#f0e020"/><line x1="524.8" y1="266" x2="524.8" y2="309" stroke="#6a6a30" stroke-width="0.6" stroke-dasharray="1,2"/><path d="M155.5,267.2 l1.7,1.7 -1.7,1.7 -1.7,-1.7z" fill="none" stroke="#2aa8b8" stroke-width="0.6"/><text x="161.8" y="273.2" font-size="6.6" fill="#e8e8e8" text-anchor="start" font-weight="normal" textLength="15.2" lengthAdjust="spacingAndGlyphs">1mV/D</text><path d="M182.5,267.2 l1.7,1.7 -1.7,1.7 -1.7,-1.7z" fill="none" stroke="#2aa8b8" stroke-width="0.6"/><text x="319" y="272.5" font-size="6.2" fill="#eee" text-anchor="start" font-weight="normal" textLength="39.3" lengthAdjust="spacingAndGlyphs">L Tibialis anterior</text><path d="M489.5,267.2 l1.7,1.7 -1.7,1.7 -1.7,-1.7z" fill="none" stroke="#2aa8b8" stroke-width="0.6"/><text x="495.6" y="273.2" font-size="6.6" fill="#eee" text-anchor="start" font-weight="normal" textLength="10.8" lengthAdjust="spacingAndGlyphs">3s/D</text><path d="M512.6,267.2 l1.7,1.7 -1.7,1.7 -1.7,-1.7z" fill="none" stroke="#2aa8b8" stroke-width="0.6"/><rect x="150" y="310" width="503" height="13.2" fill="#f0f0f0"/><rect x="332.6" y="311" width="25.2" height="11.2" rx="1.4" fill="#dcebf8" stroke="#a8cbe8" stroke-width="0.7"/><text x="151.5" y="319.4" font-size="7.2" fill="#1a1a1a" text-anchor="start" font-weight="normal" textLength="22.5" lengthAdjust="spacingAndGlyphs" stroke="#1a1a1a" stroke-width="0.1">End Visit</text><text x="179.5" y="319.4" font-size="7.2" fill="#1a1a1a" text-anchor="start" font-weight="normal" textLength="22.5" lengthAdjust="spacingAndGlyphs" stroke="#1a1a1a" stroke-width="0.1">Exit Test</text><text x="207.8" y="319.4" font-size="7.2" fill="#1a1a1a" text-anchor="start" font-weight="normal" textLength="30.7" lengthAdjust="spacingAndGlyphs" stroke="#1a1a1a" stroke-width="0.1">New Muscle</text><text x="244.4" y="319.4" font-size="7.2" fill="#1a1a1a" text-anchor="start" font-weight="normal" textLength="24.1" lengthAdjust="spacingAndGlyphs" stroke="#1a1a1a" stroke-width="0.1">New Side</text><text x="276.5" y="319.4" font-size="7.2" fill="#1a1a1a" text-anchor="start" font-weight="normal" textLength="12.2" lengthAdjust="spacingAndGlyphs" stroke="#1a1a1a" stroke-width="0.1">Next</text><text x="296" y="319.4" font-size="7.2" fill="#1a1a1a" text-anchor="start" font-weight="normal" textLength="32.5" lengthAdjust="spacingAndGlyphs" stroke="#1a1a1a" stroke-width="0.1">Needle EMG</text><text x="334.7" y="319.4" font-size="7.2" fill="#1a1a1a" text-anchor="start" font-weight="normal" textLength="20.3" lengthAdjust="spacingAndGlyphs" stroke="#1a1a1a" stroke-width="0.1">AVEMG</text><text x="360.7" y="319.4" font-size="7.2" fill="#1a1a1a" text-anchor="start" font-weight="normal" textLength="87.6" lengthAdjust="spacingAndGlyphs" stroke="#1a1a1a" stroke-width="0.1">MUP (Amplitude trigger and Delay)</text><text x="454.3" y="319.4" font-size="7.2" fill="#1a1a1a" text-anchor="start" font-weight="normal" textLength="33.4" lengthAdjust="spacingAndGlyphs" stroke="#1a1a1a" stroke-width="0.1">MUP (Single)</text><text x="493.4" y="319.4" font-size="7.2" fill="#1a1a1a" text-anchor="start" font-weight="normal" textLength="26.5" lengthAdjust="spacingAndGlyphs" stroke="#1a1a1a" stroke-width="0.1">Multi MUP</text><text x="526" y="319.4" font-size="7.2" fill="#1a1a1a" text-anchor="start" font-weight="normal" textLength="52" lengthAdjust="spacingAndGlyphs" stroke="#1a1a1a" stroke-width="0.1">Turns and Amplitude</text><text x="584" y="319.4" font-size="7.2" fill="#1a1a1a" text-anchor="start" font-weight="normal" textLength="28" lengthAdjust="spacingAndGlyphs" stroke="#1a1a1a" stroke-width="0.1">Peak Ratio</text><text x="617.9" y="319.4" font-size="7.2" fill="#1a1a1a" text-anchor="start" font-weight="normal" textLength="37.5" lengthAdjust="spacingAndGlyphs" stroke="#1a1a1a" stroke-width="0.1">Jitter Volitional</text><rect x="150" y="323.2" width="503" height="19.8" fill="#f0f0f0"/><rect x="150.6" y="324.4" width="80" height="20" rx="1.5" fill="#f0f0f0" stroke="#e6a88a" stroke-width="0.8"/><text x="190.5" y="331" font-size="6.6" fill="#1a1a1a" text-anchor="middle" font-weight="normal" textLength="29" lengthAdjust="spacingAndGlyphs" stroke="#1a1a1a" stroke-width="0.05">New Muscle</text><text x="190.5" y="340.6" font-size="6.6" fill="#1a1a1a" text-anchor="middle" font-weight="normal" textLength="21.5" lengthAdjust="spacingAndGlyphs" stroke="#1a1a1a" stroke-width="0.05">Exit Test</text><path d="M218.8,327.6 l2.6,2.4 M219.6,329.6 l2,-1.8" stroke="#555" stroke-width="0.7"/><rect x="218.6" y="337.2" width="3.4" height="3.4" rx="0.5" fill="#fff" stroke="#999" stroke-width="0.4"/><circle cx="220.3" cy="339" r="1" fill="#c02020"/><rect x="234.4" y="324.4" width="80.2" height="20" rx="1.5" fill="#f0f0f0" stroke="#eed27a" stroke-width="0.8"/><text x="273" y="336" font-size="6.6" fill="#1a1a1a" text-anchor="middle" font-weight="normal" textLength="31.2" lengthAdjust="spacingAndGlyphs" stroke="#1a1a1a" stroke-width="0.05">Needle EMG</text><ellipse cx="305.8" cy="334.5" rx="2" ry="1.5" fill="#f0e060" stroke="#b8a030" stroke-width="0.4"/><rect x="318.8" y="324.4" width="80" height="20" rx="1.5" fill="#f0f0f0" stroke="#b3aadc" stroke-width="0.8"/><text x="358.6" y="331" font-size="6.6" fill="#1a1a1a" text-anchor="middle" font-weight="normal" textLength="30" lengthAdjust="spacingAndGlyphs" stroke="#1a1a1a" stroke-width="0.05">Epoch Table</text><text x="358.6" y="340.6" font-size="6.6" fill="#1a1a1a" text-anchor="middle" font-weight="normal" textLength="24" lengthAdjust="spacingAndGlyphs" stroke="#1a1a1a" stroke-width="0.05">Full Trace</text><rect x="387.3" y="337.2" width="4.2" height="4" rx="0.5" fill="#e8e8f8" stroke="#7a70c8" stroke-width="0.5"/><rect x="402.3" y="324.4" width="81.3" height="20" rx="1.5" fill="#f0f0f0" stroke="#a8d4a8" stroke-width="0.8"/><text x="443" y="331" font-size="6.6" fill="#1a1a1a" text-anchor="middle" font-weight="normal" textLength="35" lengthAdjust="spacingAndGlyphs" stroke="#1a1a1a" stroke-width="0.05">Prev Abnormal</text><text x="443" y="340.6" font-size="6.6" fill="#1a1a1a" text-anchor="middle" font-weight="normal" textLength="35" lengthAdjust="spacingAndGlyphs" stroke="#1a1a1a" stroke-width="0.05">Next Abnormal</text><path d="M472.6,330.6 h3.2 l-1.6,-1.8z" fill="#222"/><path d="M472.6,338.6 h3.2 l-1.6,1.8z" fill="#222"/><rect x="485.5" y="324.4" width="82" height="20" rx="1.5" fill="#f0f0f0" stroke="#e2e2e2" stroke-width="0.6"/><text x="527" y="331" font-size="6.6" fill="#1a1a1a" text-anchor="middle" font-weight="normal" textLength="32" lengthAdjust="spacingAndGlyphs" stroke="#1a1a1a" stroke-width="0.05">Summ. Panel</text><text x="527" y="340.6" font-size="6.6" fill="#1a1a1a" text-anchor="middle" font-weight="normal" textLength="37" lengthAdjust="spacingAndGlyphs" stroke="#1a1a1a" stroke-width="0.05">Summary Table</text><rect x="554.6" y="327.2" width="5" height="3.6" rx="0.6" fill="#fafafa" stroke="#777" stroke-width="0.5"/><rect x="555.8" y="337.4" width="3" height="3" fill="#6a80c0"/><rect x="571.5" y="324.4" width="80.3" height="20" rx="1.5" fill="#f0f0f0" stroke="#a6cbec" stroke-width="0.8"/><text x="611.3" y="331" font-size="6.6" fill="#1a1a1a" text-anchor="middle" font-weight="normal" textLength="22" lengthAdjust="spacingAndGlyphs" stroke="#1a1a1a" stroke-width="0.05">Transfer</text><text x="611.3" y="340.6" font-size="6.6" fill="#8a8a8a" text-anchor="middle" font-weight="normal" textLength="39" lengthAdjust="spacingAndGlyphs">Next Study Exam</text><path d="M640.4,330.4 l1.8,-2.6 1.8,2.6z" fill="#6a5ad0"/><rect x="642" y="331" width="11" height="12" fill="#222" stroke="#444" stroke-width="0.5"/><rect x="645.2" y="333.6" width="1.3" height="6.4" fill="#eee"/><rect x="648.4" y="333.6" width="1.3" height="6.4" fill="#eee"/><rect x="525.6" y="77.5" width="127.4" height="232.5" fill="#f4f4f4"/><rect x="525.6" y="77.5" width="1.6" height="232.5" fill="#e4e4e4"/><rect x="527.4" y="77.5" width="125.6" height="58" fill="#fdfdfd"/><text x="529.3" y="83.6" font-size="4.8" fill="#999" text-anchor="start" font-weight="normal" textLength="23" lengthAdjust="spacingAndGlyphs">Results Table</text><path d="M628.6,80.0 l2.4,2.4 M629.8,81.2 l-1.8,1.8 M630.3,79.8 l1.5,1.5" stroke="#999" stroke-width="0.5"/><circle cx="639.3" cy="81.8" r="1.8" fill="none" stroke="#999" stroke-width="0.5"/><path d="M646.8,80.0 l3.4,3.4 M650.2,80.0 l-3.4,3.4" stroke="#888" stroke-width="0.5"/><text x="587.8" y="94.8" font-size="6" fill="#181818" text-anchor="middle" font-weight="normal" textLength="36.5" lengthAdjust="spacingAndGlyphs">L Tibialis anterior</text><rect x="528.4" y="99.5" width="118.6" height="12.9" fill="#b7d3ee"/><line x1="546.1" y1="99.5" x2="546.1" y2="112.4" stroke="#e8eff8" stroke-width="0.7"/><line x1="568.6" y1="99.5" x2="568.6" y2="112.4" stroke="#e8eff8" stroke-width="0.7"/><line x1="588.8" y1="99.5" x2="588.8" y2="112.4" stroke="#e8eff8" stroke-width="0.7"/><line x1="610.2" y1="99.5" x2="610.2" y2="112.4" stroke="#e8eff8" stroke-width="0.7"/><line x1="630.5" y1="99.5" x2="630.5" y2="112.4" stroke="#e8eff8" stroke-width="0.7"/><text x="537.25" y="107.6" font-size="4.8" fill="#333" text-anchor="middle" font-weight="normal" stroke="#333" stroke-width="0.05">Site</text><text x="557.35" y="107.6" font-size="4.8" fill="#333" text-anchor="middle" font-weight="normal" stroke="#333" stroke-width="0.05">Normal</text><text x="578.7" y="107.6" font-size="4.8" fill="#333" text-anchor="middle" font-weight="normal" stroke="#333" stroke-width="0.05">Fence</text><text x="599.5" y="107.6" font-size="4.8" fill="#333" text-anchor="middle" font-weight="normal" stroke="#333" stroke-width="0.05">Amp</text><text x="620.35" y="107.6" font-size="4.8" fill="#333" text-anchor="middle" font-weight="normal" stroke="#333" stroke-width="0.05">MP-S</text><text x="638.75" y="107.6" font-size="4.8" fill="#333" text-anchor="middle" font-weight="normal" stroke="#333" stroke-width="0.05">MP-E</text><rect x="528.4" y="112.6" width="118.6" height="9.2" fill="#f1f1f1"/><path d="M528.4,112.8 H647 M528.4,121.5 H647 M528.8,112.8 V121.5" stroke="#3538b8" stroke-width="0.9"/><line x1="546.1" y1="113.4" x2="546.1" y2="121" stroke="#dcdcdc" stroke-width="0.5"/><line x1="568.6" y1="113.4" x2="568.6" y2="121" stroke="#dcdcdc" stroke-width="0.5"/><line x1="588.8" y1="113.4" x2="588.8" y2="121" stroke="#dcdcdc" stroke-width="0.5"/><line x1="610.2" y1="113.4" x2="610.2" y2="121" stroke="#dcdcdc" stroke-width="0.5"/><line x1="630.5" y1="113.4" x2="630.5" y2="121" stroke="#dcdcdc" stroke-width="0.5"/><text x="537.3" y="119.5" font-size="5.4" fill="#111" text-anchor="middle" font-weight="normal" stroke="#111" stroke-width="0.05">1</text><text x="567.8" y="119.8" font-size="6.6" fill="#181818" text-anchor="end" font-weight="normal">89%</text><text x="647" y="119.5" font-size="5.4" fill="#111" text-anchor="end" font-weight="normal" stroke="#111" stroke-width="0.05">1'</text><rect x="527.4" y="129.6" width="125.6" height="5.4" fill="#f0f0f0"/><rect x="531.2" y="130" width="47" height="4.6" fill="#c6c6c6"/><path d="M529.8,131 l-1,1.3 1,1.3 M650.6,131 l1,1.3 -1,1.3" fill="none" stroke="#666" stroke-width="0.5"/><rect x="527.4" y="135.4" width="125.6" height="8.2" fill="#fdfdfd"/><text x="529.3" y="141.6" font-size="4.8" fill="#999" text-anchor="start" font-weight="normal" textLength="24.5" lengthAdjust="spacingAndGlyphs">Results Graphs</text><path d="M628.6,138.39999999999998 l2.4,2.4 M629.8,139.6 l-1.8,1.8 M630.3,138.2 l1.5,1.5" stroke="#999" stroke-width="0.5"/><circle cx="639.3" cy="140.2" r="1.8" fill="none" stroke="#999" stroke-width="0.5"/><path d="M646.8,138.39999999999998 l3.4,3.4 M650.2,138.39999999999998 l-3.4,3.4" stroke="#888" stroke-width="0.5"/><rect x="527.4" y="143.6" width="125.6" height="166.4" fill="#f0f0f0"/><text x="588.4" y="150.4" font-size="5.4" fill="#111" text-anchor="middle" font-weight="normal" textLength="46.7" lengthAdjust="spacingAndGlyphs" stroke="#111" stroke-width="0.05">Amplitude (µV) x Fullness (%)</text><path d="M538.8,152.4 V219.8 H648.3" fill="none" stroke="#777" stroke-width="0.6"/><line x1="537.4" y1="176.0" x2="538.8" y2="176.0" stroke="#888" stroke-width="0.5"/><line x1="537.4" y1="170.0" x2="538.8" y2="170.0" stroke="#888" stroke-width="0.5"/><line x1="537.4" y1="165.8" x2="538.8" y2="165.8" stroke="#888" stroke-width="0.5"/><line x1="537.4" y1="162.5" x2="538.8" y2="162.5" stroke="#888" stroke-width="0.5"/><line x1="537.4" y1="159.9" x2="538.8" y2="159.9" stroke="#888" stroke-width="0.5"/><line x1="537.4" y1="157.6" x2="538.8" y2="157.6" stroke="#888" stroke-width="0.5"/><line x1="537.4" y1="155.7" x2="538.8" y2="155.7" stroke="#888" stroke-width="0.5"/><line x1="537.4" y1="153.9" x2="538.8" y2="153.9" stroke="#888" stroke-width="0.5"/><line x1="537.4" y1="209.7" x2="538.8" y2="209.7" stroke="#888" stroke-width="0.5"/><line x1="537.4" y1="203.7" x2="538.8" y2="203.7" stroke="#888" stroke-width="0.5"/><line x1="537.4" y1="199.5" x2="538.8" y2="199.5" stroke="#888" stroke-width="0.5"/><line x1="537.4" y1="196.2" x2="538.8" y2="196.2" stroke="#888" stroke-width="0.5"/><line x1="537.4" y1="193.6" x2="538.8" y2="193.6" stroke="#888" stroke-width="0.5"/><line x1="537.4" y1="191.3" x2="538.8" y2="191.3" stroke="#888" stroke-width="0.5"/><line x1="537.4" y1="189.4" x2="538.8" y2="189.4" stroke="#888" stroke-width="0.5"/><line x1="537.4" y1="187.6" x2="538.8" y2="187.6" stroke="#888" stroke-width="0.5"/><text x="538" y="154.2" font-size="4.4" fill="#333" text-anchor="end" font-weight="normal" textLength="10.5" lengthAdjust="spacingAndGlyphs" stroke="#333" stroke-width="0.05">10000</text><text x="538" y="187.8" font-size="4.4" fill="#333" text-anchor="end" font-weight="normal" textLength="8.5" lengthAdjust="spacingAndGlyphs" stroke="#333" stroke-width="0.05">1000</text><text x="538" y="221.6" font-size="4.4" fill="#333" text-anchor="end" font-weight="normal" textLength="6.5" lengthAdjust="spacingAndGlyphs" stroke="#333" stroke-width="0.05">100</text><text x="539" y="225.2" font-size="4.3" fill="#333" text-anchor="middle" font-weight="normal" stroke="#333" stroke-width="0.05">0</text><text x="560.6" y="225.2" font-size="4.3" fill="#333" text-anchor="middle" font-weight="normal" stroke="#333" stroke-width="0.05">20</text><text x="582.4" y="225.2" font-size="4.3" fill="#333" text-anchor="middle" font-weight="normal" stroke="#333" stroke-width="0.05">40</text><text x="604" y="225.2" font-size="4.3" fill="#333" text-anchor="middle" font-weight="normal" stroke="#333" stroke-width="0.05">60</text><text x="625.8" y="225.2" font-size="4.3" fill="#333" text-anchor="middle" font-weight="normal" stroke="#333" stroke-width="0.05">80</text><text x="648" y="225.2" font-size="4.3" fill="#333" text-anchor="middle" font-weight="normal" stroke="#333" stroke-width="0.05">100</text><path d="M546.7,170 H582.8 V199.6 H546.7Z M582.8,162.3 H625.3 V190.5 H582.8Z M625.3,162.3 H648.5 V186.3 H625.3Z" fill="none" stroke="#86bf86" stroke-width="0.7"/><ellipse cx="549.4" cy="185.7" rx="1.25" ry="1.4" fill="#0c1ae8"/><ellipse cx="549.4" cy="187.3" rx="1.25" ry="1.4" fill="#0c1ae8"/><ellipse cx="549.4" cy="193.7" rx="1.25" ry="1.4" fill="#0c1ae8"/><ellipse cx="555" cy="186" rx="1.25" ry="1.4" fill="#0c1ae8"/><ellipse cx="560.3" cy="184" rx="1.25" ry="1.4" fill="#0c1ae8"/><ellipse cx="560.3" cy="186" rx="1.25" ry="1.4" fill="#0c1ae8"/><ellipse cx="560.3" cy="187.7" rx="1.25" ry="1.4" fill="#0c1ae8"/><ellipse cx="565.9" cy="183.7" rx="1.25" ry="1.4" fill="#0c1ae8"/><ellipse cx="565.9" cy="187.7" rx="1.25" ry="1.4" fill="#0c1ae8"/><ellipse cx="571.4" cy="185" rx="1.25" ry="1.4" fill="#0c1ae8"/><ellipse cx="571.4" cy="190" rx="1.25" ry="1.4" fill="#0c1ae8"/><ellipse cx="577" cy="175.7" rx="1.25" ry="1.4" fill="#0c1ae8"/><ellipse cx="577" cy="177.9" rx="1.25" ry="1.4" fill="#0c1ae8"/><ellipse cx="577" cy="183.3" rx="1.25" ry="1.4" fill="#0c1ae8"/><ellipse cx="582.6" cy="178.6" rx="1.25" ry="1.4" fill="#0c1ae8"/><ellipse cx="582.6" cy="184.6" rx="1.25" ry="1.4" fill="#0c1ae8"/><ellipse cx="588" cy="182.3" rx="1.25" ry="1.4" fill="#0c1ae8"/><ellipse cx="588" cy="184.6" rx="1.25" ry="1.4" fill="#0c1ae8"/><ellipse cx="588" cy="186.7" rx="1.25" ry="1.4" fill="#0c1ae8"/><ellipse cx="593.7" cy="179" rx="1.25" ry="1.4" fill="#0c1ae8"/><ellipse cx="593.7" cy="184.6" rx="1.25" ry="1.4" fill="#0c1ae8"/><ellipse cx="593.7" cy="187" rx="1.25" ry="1.4" fill="#0c1ae8"/><ellipse cx="599" cy="173" rx="1.25" ry="1.4" fill="#0c1ae8"/><ellipse cx="599" cy="175" rx="1.25" ry="1.4" fill="#0c1ae8"/><ellipse cx="599" cy="184" rx="1.25" ry="1.4" fill="#0c1ae8"/><ellipse cx="604.7" cy="173.7" rx="1.25" ry="1.4" fill="#0c1ae8"/><ellipse cx="604.7" cy="179.7" rx="1.25" ry="1.4" fill="#0c1ae8"/><ellipse cx="610" cy="172" rx="1.25" ry="1.4" fill="#0c1ae8"/><ellipse cx="610" cy="174.3" rx="1.25" ry="1.4" fill="#0c1ae8"/><ellipse cx="610" cy="180" rx="1.25" ry="1.4" fill="#0c1ae8"/><ellipse cx="615.6" cy="172.3" rx="1.25" ry="1.4" fill="#0c1ae8"/><ellipse cx="615.6" cy="175.7" rx="1.25" ry="1.4" fill="#0c1ae8"/><ellipse cx="621" cy="170" rx="1.25" ry="1.4" fill="#0c1ae8"/><ellipse cx="621" cy="172" rx="1.25" ry="1.4" fill="#0c1ae8"/><ellipse cx="621" cy="177" rx="1.25" ry="1.4" fill="#0c1ae8"/><ellipse cx="621" cy="178.7" rx="1.25" ry="1.4" fill="#0c1ae8"/><ellipse cx="626.7" cy="169.4" rx="1.25" ry="1.4" fill="#0c1ae8"/><ellipse cx="626.7" cy="172" rx="1.25" ry="1.4" fill="#0c1ae8"/><ellipse cx="626.7" cy="175.7" rx="1.25" ry="1.4" fill="#0c1ae8"/><ellipse cx="632.3" cy="171.7" rx="1.25" ry="1.4" fill="#0c1ae8"/><ellipse cx="632.3" cy="174.3" rx="1.25" ry="1.4" fill="#0c1ae8"/><ellipse cx="637.6" cy="170.7" rx="1.25" ry="1.4" fill="#0c1ae8"/><ellipse cx="637.6" cy="173" rx="1.25" ry="1.4" fill="#0c1ae8"/><ellipse cx="637.6" cy="175.7" rx="1.25" ry="1.4" fill="#0c1ae8"/><ellipse cx="637.6" cy="180" rx="1.25" ry="1.4" fill="#0c1ae8"/><ellipse cx="643.3" cy="170.7" rx="1.25" ry="1.4" fill="#0c1ae8"/><ellipse cx="643.3" cy="173.7" rx="1.25" ry="1.4" fill="#0c1ae8"/><ellipse cx="643.3" cy="176" rx="1.25" ry="1.4" fill="#0c1ae8"/><ellipse cx="648.7" cy="168.3" rx="1.25" ry="1.4" fill="#0c1ae8"/><ellipse cx="648.7" cy="171" rx="1.25" ry="1.4" fill="#0c1ae8"/><ellipse cx="648.7" cy="174.3" rx="1.25" ry="1.4" fill="#0c1ae8"/><ellipse cx="549.4" cy="183.7" rx="1.25" ry="1.4" fill="#9a9a3a"/><ellipse cx="571.4" cy="187" rx="1.25" ry="1.4" fill="#9a9a3a"/><ellipse cx="615.6" cy="178.3" rx="1.25" ry="1.4" fill="#9a9a3a"/><ellipse cx="582.6" cy="188" rx="1.25" ry="1.4" fill="#e06050"/><text x="590.9" y="232.3" font-size="5.2" fill="#111" text-anchor="middle" font-weight="normal" textLength="38.6" lengthAdjust="spacingAndGlyphs" stroke="#111" stroke-width="0.05">Pitch (Hz) x Fullness (%)</text><path d="M534.6,235.1 V302.4 H648.3" fill="none" stroke="#777" stroke-width="0.6"/><text x="534" y="237.2" font-size="4.4" fill="#333" text-anchor="end" font-weight="normal" textLength="6.5" lengthAdjust="spacingAndGlyphs" stroke="#333" stroke-width="0.05">400</text><text x="534" y="271" font-size="4.4" fill="#333" text-anchor="end" font-weight="normal" textLength="6.5" lengthAdjust="spacingAndGlyphs" stroke="#333" stroke-width="0.05">265</text><text x="534" y="304.4" font-size="4.4" fill="#333" text-anchor="end" font-weight="normal" textLength="6.5" lengthAdjust="spacingAndGlyphs" stroke="#333" stroke-width="0.05">100</text><text x="534.8" y="308" font-size="4.3" fill="#333" text-anchor="middle" font-weight="normal" stroke="#333" stroke-width="0.05">0</text><text x="557.2" y="308" font-size="4.3" fill="#333" text-anchor="middle" font-weight="normal" stroke="#333" stroke-width="0.05">20</text><text x="579.8" y="308" font-size="4.3" fill="#333" text-anchor="middle" font-weight="normal" stroke="#333" stroke-width="0.05">40</text><text x="602.6" y="308" font-size="4.3" fill="#333" text-anchor="middle" font-weight="normal" stroke="#333" stroke-width="0.05">60</text><text x="625.5" y="308" font-size="4.3" fill="#333" text-anchor="middle" font-weight="normal" stroke="#333" stroke-width="0.05">80</text><text x="648.2" y="308" font-size="4.3" fill="#333" text-anchor="middle" font-weight="normal" stroke="#333" stroke-width="0.05">100</text><path d="M542.8,243.6 H580.3 V295 H542.8Z M580.3,253.6 H624.6 V292.8 H580.3Z M624.6,253.6 H648.6 V292.8 H624.6Z" fill="none" stroke="#86bf86" stroke-width="0.7"/><ellipse cx="545.6" cy="244.3" rx="1.25" ry="1.4" fill="#0c1ae8"/><ellipse cx="545.6" cy="272" rx="1.25" ry="1.4" fill="#0c1ae8"/><ellipse cx="545.6" cy="281.3" rx="1.25" ry="1.4" fill="#0c1ae8"/><ellipse cx="545.6" cy="283.4" rx="1.25" ry="1.4" fill="#0c1ae8"/><ellipse cx="545.6" cy="285.2" rx="1.25" ry="1.4" fill="#0c1ae8"/><ellipse cx="545.6" cy="287.5" rx="1.25" ry="1.4" fill="#0c1ae8"/><ellipse cx="551.3" cy="266.2" rx="1.25" ry="1.4" fill="#0c1ae8"/><ellipse cx="551.3" cy="273.3" rx="1.25" ry="1.4" fill="#0c1ae8"/><ellipse cx="551.3" cy="275" rx="1.25" ry="1.4" fill="#0c1ae8"/><ellipse cx="551.3" cy="276.8" rx="1.25" ry="1.4" fill="#0c1ae8"/><ellipse cx="551.3" cy="283" rx="1.25" ry="1.4" fill="#0c1ae8"/><ellipse cx="557" cy="251.1" rx="1.25" ry="1.4" fill="#0c1ae8"/><ellipse cx="557" cy="275" rx="1.25" ry="1.4" fill="#0c1ae8"/><ellipse cx="557" cy="281.3" rx="1.25" ry="1.4" fill="#0c1ae8"/><ellipse cx="562.5" cy="253.8" rx="1.25" ry="1.4" fill="#0c1ae8"/><ellipse cx="562.5" cy="271.5" rx="1.25" ry="1.4" fill="#0c1ae8"/><ellipse cx="562.5" cy="273.8" rx="1.25" ry="1.4" fill="#0c1ae8"/><ellipse cx="562.5" cy="278" rx="1.25" ry="1.4" fill="#0c1ae8"/><ellipse cx="562.5" cy="284" rx="1.25" ry="1.4" fill="#0c1ae8"/><ellipse cx="568.2" cy="258.5" rx="1.25" ry="1.4" fill="#0c1ae8"/><ellipse cx="568.2" cy="260" rx="1.25" ry="1.4" fill="#0c1ae8"/><ellipse cx="568.2" cy="261.4" rx="1.25" ry="1.4" fill="#0c1ae8"/><ellipse cx="568.2" cy="266.2" rx="1.25" ry="1.4" fill="#0c1ae8"/><ellipse cx="568.2" cy="280.4" rx="1.25" ry="1.4" fill="#0c1ae8"/><ellipse cx="574" cy="267.4" rx="1.25" ry="1.4" fill="#0c1ae8"/><ellipse cx="574" cy="270.6" rx="1.25" ry="1.4" fill="#0c1ae8"/><ellipse cx="574" cy="272.4" rx="1.25" ry="1.4" fill="#0c1ae8"/><ellipse cx="574" cy="276.3" rx="1.25" ry="1.4" fill="#0c1ae8"/><ellipse cx="580" cy="269.2" rx="1.25" ry="1.4" fill="#0c1ae8"/><ellipse cx="580" cy="270.6" rx="1.25" ry="1.4" fill="#0c1ae8"/><ellipse cx="585.6" cy="261.7" rx="1.25" ry="1.4" fill="#0c1ae8"/><ellipse cx="585.6" cy="263.5" rx="1.25" ry="1.4" fill="#0c1ae8"/><ellipse cx="585.6" cy="265.3" rx="1.25" ry="1.4" fill="#0c1ae8"/><ellipse cx="585.6" cy="275.6" rx="1.25" ry="1.4" fill="#0c1ae8"/><ellipse cx="591.2" cy="255.5" rx="1.25" ry="1.4" fill="#0c1ae8"/><ellipse cx="591.2" cy="261.2" rx="1.25" ry="1.4" fill="#0c1ae8"/><ellipse cx="591.2" cy="275.6" rx="1.25" ry="1.4" fill="#0c1ae8"/><ellipse cx="597" cy="266.2" rx="1.25" ry="1.4" fill="#0c1ae8"/><ellipse cx="597" cy="267.4" rx="1.25" ry="1.4" fill="#0c1ae8"/><ellipse cx="597" cy="273" rx="1.25" ry="1.4" fill="#0c1ae8"/><ellipse cx="602.8" cy="267" rx="1.25" ry="1.4" fill="#0c1ae8"/><ellipse cx="602.8" cy="273.3" rx="1.25" ry="1.4" fill="#0c1ae8"/><ellipse cx="602.8" cy="279.5" rx="1.25" ry="1.4" fill="#0c1ae8"/><ellipse cx="608.1" cy="260" rx="1.25" ry="1.4" fill="#0c1ae8"/><ellipse cx="608.1" cy="264.4" rx="1.25" ry="1.4" fill="#0c1ae8"/><ellipse cx="608.1" cy="268" rx="1.25" ry="1.4" fill="#0c1ae8"/><ellipse cx="614" cy="268" rx="1.25" ry="1.4" fill="#0c1ae8"/><ellipse cx="614" cy="276.3" rx="1.25" ry="1.4" fill="#0c1ae8"/><ellipse cx="619.6" cy="265.3" rx="1.25" ry="1.4" fill="#0c1ae8"/><ellipse cx="619.6" cy="269.7" rx="1.25" ry="1.4" fill="#0c1ae8"/><ellipse cx="619.6" cy="275.6" rx="1.25" ry="1.4" fill="#0c1ae8"/><ellipse cx="619.6" cy="278.6" rx="1.25" ry="1.4" fill="#0c1ae8"/><ellipse cx="625.5" cy="267.4" rx="1.25" ry="1.4" fill="#0c1ae8"/><ellipse cx="625.5" cy="269.2" rx="1.25" ry="1.4" fill="#0c1ae8"/><ellipse cx="625.5" cy="278" rx="1.25" ry="1.4" fill="#0c1ae8"/><ellipse cx="625.5" cy="279.5" rx="1.25" ry="1.4" fill="#0c1ae8"/><ellipse cx="631.2" cy="266.2" rx="1.25" ry="1.4" fill="#0c1ae8"/><ellipse cx="631.2" cy="273.3" rx="1.25" ry="1.4" fill="#0c1ae8"/><ellipse cx="631.2" cy="276" rx="1.25" ry="1.4" fill="#0c1ae8"/><ellipse cx="631.2" cy="278.6" rx="1.25" ry="1.4" fill="#0c1ae8"/><ellipse cx="636.9" cy="262.1" rx="1.25" ry="1.4" fill="#0c1ae8"/><ellipse cx="636.9" cy="271" rx="1.25" ry="1.4" fill="#0c1ae8"/><ellipse cx="636.9" cy="274.2" rx="1.25" ry="1.4" fill="#0c1ae8"/><ellipse cx="636.9" cy="276.8" rx="1.25" ry="1.4" fill="#0c1ae8"/><ellipse cx="636.9" cy="278.6" rx="1.25" ry="1.4" fill="#0c1ae8"/><ellipse cx="636.9" cy="281.3" rx="1.25" ry="1.4" fill="#0c1ae8"/><ellipse cx="642.7" cy="270.6" rx="1.25" ry="1.4" fill="#0c1ae8"/><ellipse cx="642.7" cy="275" rx="1.25" ry="1.4" fill="#0c1ae8"/><ellipse cx="642.7" cy="279.5" rx="1.25" ry="1.4" fill="#0c1ae8"/><ellipse cx="648.4" cy="269.7" rx="1.25" ry="1.4" fill="#0c1ae8"/><ellipse cx="648.4" cy="272.4" rx="1.25" ry="1.4" fill="#0c1ae8"/><ellipse cx="648.4" cy="274.5" rx="1.25" ry="1.4" fill="#0c1ae8"/><ellipse cx="648.4" cy="276.8" rx="1.25" ry="1.4" fill="#0c1ae8"/><ellipse cx="545.6" cy="288.7" rx="1.25" ry="1.4" fill="#9a9a3a"/><ellipse cx="562.5" cy="248.4" rx="1.25" ry="1.4" fill="#9a9a3a"/><ellipse cx="568.2" cy="252.9" rx="1.25" ry="1.4" fill="#9a9a3a"/><ellipse cx="614" cy="273.8" rx="1.25" ry="1.4" fill="#9a9a3a"/><ellipse cx="625.5" cy="261.4" rx="1.25" ry="1.4" fill="#9a9a3a"/><ellipse cx="625.5" cy="264.4" rx="1.25" ry="1.4" fill="#9a9a3a"/><ellipse cx="568.2" cy="256" rx="1.25" ry="1.4" fill="#e87830"/><ellipse cx="580" cy="260" rx="1.25" ry="1.4" fill="#e87830"/><circle cx="580" cy="256" r="1.5" fill="#e070c0" stroke="#c050a0" stroke-width="0.4"/><path d="M617.6,277.6 v4.6 l1.2,-1 1,2 0.8,-0.4 -1,-1.9 h1.6z" fill="#fff" stroke="#333" stroke-width="0.4"/><line x1="150" y1="342.3" x2="653" y2="342.3" stroke="#1e3270" stroke-width="0.7"/></g></svg>
</body></html>
